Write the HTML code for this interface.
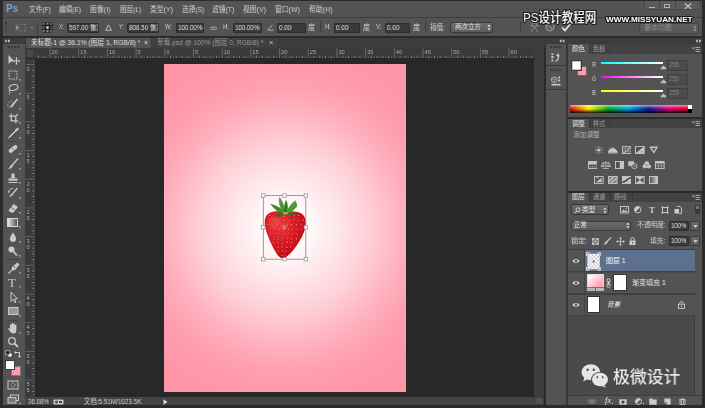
<!DOCTYPE html>
<html lang="zh-CN"><head><meta charset="utf-8"><title>Photoshop</title><style>
*{margin:0;padding:0;box-sizing:border-box}
html,body{width:705px;height:408px;overflow:hidden;background:#282828;}
body{position:relative;font-family:"Liberation Sans","Noto Sans CJK SC",sans-serif;color:#d0d0d0;font-size:8px;line-height:1}
.a{position:absolute}
.t{position:absolute;white-space:nowrap;line-height:10px;height:10px;will-change:transform}
.in{position:absolute;background:#3a3a3a;border:1px solid #2e2e2e;border-radius:1px;overflow:hidden}
</style></head><body>
<div class="a" style="left:0px;top:0px;width:705px;height:408px;background:#2b2b2b;"></div>
<div class="a" style="left:3px;top:1px;width:699px;height:16px;background:#535353;"></div>
<div class="t" id="t0" style="left:6.4px;top:3.3000000000000007px;font-size:11.5px;color:#74a3dc;transform-origin:0 50%;transform:scaleX(0.852);font-weight:bold">Ps</div>
<div class="t" id="t1" style="left:28.6px;top:4.9px;font-size:7.8px;color:#d4d4d4;transform-origin:0 50%;transform:scaleX(0.857);">文件(F)</div>
<div class="t" id="t2" style="left:59.2px;top:4.9px;font-size:7.8px;color:#d4d4d4;transform-origin:0 50%;transform:scaleX(0.846);">编辑(E)</div>
<div class="t" id="t3" style="left:89.9px;top:4.9px;font-size:7.8px;color:#d4d4d4;transform-origin:0 50%;transform:scaleX(0.889);">图像(I)</div>
<div class="t" id="t4" style="left:120px;top:4.9px;font-size:7.8px;color:#d4d4d4;transform-origin:0 50%;transform:scaleX(0.844);">图层(L)</div>
<div class="t" id="t5" style="left:150px;top:4.9px;font-size:7.8px;color:#d4d4d4;transform-origin:0 50%;transform:scaleX(0.877);">类型(Y)</div>
<div class="t" id="t6" style="left:181.5px;top:4.9px;font-size:7.8px;color:#d4d4d4;transform-origin:0 50%;transform:scaleX(0.854);">选择(S)</div>
<div class="t" id="t7" style="left:212px;top:4.9px;font-size:7.8px;color:#d4d4d4;transform-origin:0 50%;transform:scaleX(0.872);">滤镜(T)</div>
<div class="t" id="t8" style="left:243.3px;top:4.9px;font-size:7.8px;color:#d4d4d4;transform-origin:0 50%;transform:scaleX(0.881);">视图(V)</div>
<div class="t" id="t9" style="left:275.4px;top:4.9px;font-size:7.8px;color:#d4d4d4;transform-origin:0 50%;transform:scaleX(0.881);">窗口(W)</div>
<div class="t" id="t10" style="left:309px;top:4.9px;font-size:7.8px;color:#d4d4d4;transform-origin:0 50%;transform:scaleX(0.893);">帮助(H)</div>
<div class="a" style="left:643.7px;top:1px;width:57px;height:9.2px;background:#5b5b5b;border-radius:0 0 2px 2px;border:0.700px solid #474747;border-top:0"></div>
<div class="a" style="left:659.3px;top:1px;width:0.8px;height:9px;background:#484848;"></div>
<div class="a" style="left:674.5px;top:1px;width:0.8px;height:9px;background:#484848;"></div>
<div class="a" style="left:648.5px;top:6.5px;width:6px;height:1.6px;background:#b4b4b4;"></div>
<div class="a" style="left:664px;top:3.5px;width:6px;height:4.5px;background:transparent;border:1.300px solid #b0b0b0"></div>
<svg class="a" style="left:684px;top:2.500px" width="8" height="6.500" viewBox="0 0 8 6.500"><path d="M0.800 0.500 L7.200 6 M7.200 0.500 L0.800 6" stroke="#c4c4c4" stroke-width="1.300"/></svg>
<div class="a" style="left:3px;top:18px;width:699px;height:18px;background:#535353;"></div>
<div class="a" style="left:3px;top:17px;width:699px;height:1px;background:#3e3e3e;"></div>
<div class="a" style="left:5.2px;top:22.3px;width:1.6px;height:1.3px;background:#363636;"></div>
<div class="a" style="left:5.2px;top:24.900000000000002px;width:1.6px;height:1.3px;background:#363636;"></div>
<div class="a" style="left:5.2px;top:27.5px;width:1.6px;height:1.3px;background:#363636;"></div>
<div class="a" style="left:5.2px;top:30.1px;width:1.6px;height:1.3px;background:#363636;"></div>
<svg class="a" style="left:14.5px;top:23px" width="20" height="10" viewBox="0 0 20 10"><path d="M0.8 1.2 L0.8 7.8 L4.6 4.5 Z" fill="#8e8e8e"/><path d="M4 1.5h6.5M4 8h6.500M10.200 1.500v6.500" stroke="#858585" stroke-width="0.900" stroke-dasharray="1.300 1.100" fill="none"/><path d="M15.600 4 h2.800 l-1.400 1.800z" fill="#909090"/></svg>
<div class="a" style="left:36.5px;top:21px;width:1px;height:13px;background:#404040;"></div>
<svg class="a" style="left:42.200px;top:22.200px" width="11" height="11" viewBox="0 0 11 11"><rect width="11" height="11" fill="#202020"/><rect x="0.9" y="0.9" width="1.600" height="1.600" fill="#202020" stroke="#8c8c8c" stroke-width="0.600"/><rect x="0.9" y="4.7" width="1.600" height="1.600" fill="#202020" stroke="#8c8c8c" stroke-width="0.600"/><rect x="0.9" y="8.5" width="1.600" height="1.600" fill="#202020" stroke="#8c8c8c" stroke-width="0.600"/><rect x="4.7" y="0.9" width="1.600" height="1.600" fill="#202020" stroke="#8c8c8c" stroke-width="0.600"/><rect x="4.7" y="4.7" width="1.600" height="1.600" fill="#202020" stroke="#8c8c8c" stroke-width="0.600"/><rect x="4.7" y="8.5" width="1.600" height="1.600" fill="#202020" stroke="#8c8c8c" stroke-width="0.600"/><rect x="8.5" y="0.9" width="1.600" height="1.600" fill="#202020" stroke="#8c8c8c" stroke-width="0.600"/><rect x="8.5" y="4.7" width="1.600" height="1.600" fill="#202020" stroke="#8c8c8c" stroke-width="0.600"/><rect x="8.5" y="8.5" width="1.600" height="1.600" fill="#202020" stroke="#8c8c8c" stroke-width="0.600"/><rect x="4.500" y="4.500" width="2" height="2" fill="#eee"/></svg>
<div class="t" id="t11" style="left:58.7px;top:22.3px;font-size:7.5px;color:#d0d0d0;transform-origin:0 50%;transform:scaleX(0.648);">X:</div>
<div class="in" style="left:66.9px;top:22.5px;width:32.3px;height:10.5px"><div class="t" id="t12" style="left:1.0px;top:-0.8px;font-size:7.5px;color:#e0e0e0;transform-origin:0 50%;transform:scaleX(0.837)">597.00 像素</div></div>
<svg class="a" style="left:104.5px;top:24px" width="7" height="7" viewBox="0 0 7 7"><path d="M3.5 0.8 L6.4 6.3 H0.6 Z" fill="none" stroke="#c8c8c8" stroke-width="0.9"/></svg>
<div class="t" id="t13" style="left:118.7px;top:22.3px;font-size:7.5px;color:#d0d0d0;transform-origin:0 50%;transform:scaleX(0.688);">Y:</div>
<div class="in" style="left:126.9px;top:22.5px;width:32.3px;height:10.5px"><div class="t" id="t14" style="left:0.6999999999999886px;top:-0.8px;font-size:7.5px;color:#e0e0e0;transform-origin:0 50%;transform:scaleX(0.837)">808.50 像素</div></div>
<div class="t" id="t15" style="left:164.6px;top:22.3px;font-size:7.5px;color:#d0d0d0;transform-origin:0 50%;transform:scaleX(0.764);">W:</div>
<div class="in" style="left:175.8px;top:22.5px;width:28.4px;height:10.5px"><div class="t" id="t16" style="left:1.0999999999999943px;top:-0.8px;font-size:7.5px;color:#e0e0e0;transform-origin:0 50%;transform:scaleX(0.817)">100.00%</div></div>
<svg class="a" style="left:209.5px;top:25.5px" width="7" height="5" viewBox="0 0 7 5"><rect x="0.5" y="1" width="3" height="2.6" rx="1.2" fill="none" stroke="#bdbdbd" stroke-width="0.8"/><rect x="3.5" y="1" width="3" height="2.6" rx="1.2" fill="none" stroke="#bdbdbd" stroke-width="0.8"/></svg>
<div class="t" id="t17" style="left:223.3px;top:22.3px;font-size:7.5px;color:#d0d0d0;transform-origin:0 50%;transform:scaleX(0.773);">H:</div>
<div class="in" style="left:233.3px;top:22.5px;width:28.3px;height:10.5px"><div class="t" id="t18" style="left:1.0px;top:-0.8px;font-size:7.5px;color:#e0e0e0;transform-origin:0 50%;transform:scaleX(0.817)">100.00%</div></div>
<svg class="a" style="left:266.5px;top:24px" width="7" height="7" viewBox="0 0 7 7"><path d="M5.5 0.8 L0.8 6.2 H6.5" fill="none" stroke="#c0c0c0" stroke-width="0.9"/></svg>
<div class="in" style="left:277px;top:22.5px;width:28.7px;height:10.5px"><div class="t" id="t19" style="left:0.8000000000000114px;top:-0.8px;font-size:7.5px;color:#e0e0e0;transform-origin:0 50%;transform:scaleX(0.842)">0.00</div></div>
<div class="t" id="t20" style="left:308px;top:22.5px;font-size:7.5px;color:#d0d0d0;transform-origin:0 50%;transform:scaleX(0.933);">度</div>
<div class="a" style="left:319.6px;top:21px;width:1px;height:12px;background:#3d3d3d;"></div>
<div class="t" id="t21" style="left:324.6px;top:22.3px;font-size:7.5px;color:#d0d0d0;transform-origin:0 50%;transform:scaleX(0.773);">H:</div>
<div class="in" style="left:334px;top:22.5px;width:25.8px;height:10.5px"><div class="t" id="t22" style="left:0.8000000000000114px;top:-0.8px;font-size:7.5px;color:#e0e0e0;transform-origin:0 50%;transform:scaleX(0.842)">0.00</div></div>
<div class="t" id="t23" style="left:362.9px;top:22.5px;font-size:7.5px;color:#d0d0d0;transform-origin:0 50%;transform:scaleX(0.933);">度</div>
<div class="t" id="t24" style="left:375.7px;top:22.3px;font-size:7.5px;color:#d0d0d0;transform-origin:0 50%;transform:scaleX(0.822);">V:</div>
<div class="in" style="left:385px;top:22.5px;width:25px;height:10.5px"><div class="t" id="t25" style="left:0.8999999999999773px;top:-0.8px;font-size:7.5px;color:#e0e0e0;transform-origin:0 50%;transform:scaleX(0.842)">0.00</div></div>
<div class="t" id="t26" style="left:413px;top:22.5px;font-size:7.5px;color:#d0d0d0;transform-origin:0 50%;transform:scaleX(0.933);">度</div>
<div class="a" style="left:424.7px;top:21px;width:1px;height:12px;background:#3d3d3d;"></div>
<div class="t" id="t27" style="left:429.8px;top:22.5px;font-size:7.5px;color:#d0d0d0;transform-origin:0 50%;transform:scaleX(0.889);">插值:</div>
<div class="a" style="left:450.2px;top:21.7px;width:43px;height:11px;background:linear-gradient(#6c6c6c,#5c5c5c);border:1px solid #3a3a3a;border-radius:2px"></div>
<div class="t" id="t28" style="left:454.5px;top:22.3px;font-size:7.2px;color:#e4e4e4;transform-origin:0 50%;transform:scaleX(0.897);">两次立方</div>
<svg class="a" style="left:486.5px;top:24px" width="4" height="7" viewBox="0 0 4 7"><path d="M0.3 2.8 L2 0.6 L3.7 2.8Z M0.3 4.2 L2 6.4 L3.7 4.2Z" fill="#d8d8d8"/></svg>
<div class="a" style="left:520px;top:21px;width:1px;height:12px;background:#3d3d3d;"></div>
<svg class="a" style="left:529px;top:21px" width="11" height="12" viewBox="0 0 11 12"><path d="M1 1 Q5.5 4 10 1 M1 4.5 Q5.5 6.5 10 4.5 M2 11 L5.5 6 L9 11 M3.5 1.8 L3.5 5 M7.5 1.8 V5" fill="none" stroke="#8f8f8f" stroke-width="0.9"/></svg>
<svg class="a" style="left:545px;top:22px" width="10" height="10" viewBox="0 0 10 10"><circle cx="5" cy="5" r="3.8" fill="none" stroke="#9a9a9a" stroke-width="1.2"/><path d="M2.3 2.3 L7.7 7.7" stroke="#9a9a9a" stroke-width="1.2"/></svg>
<svg class="a" style="left:561px;top:22px" width="11" height="10" viewBox="0 0 11 10"><path d="M1 5.5 L4 8.5 L10 1" fill="none" stroke="#e6e6e6" stroke-width="1.7"/></svg>
<div class="a" style="left:639.4px;top:23px;width:59.6px;height:10.5px;background:linear-gradient(#5e5e5e,#565656);border:1px solid #444;border-radius:2px"></div>
<div class="t" id="t29" style="left:644px;top:23.3px;font-size:7.5px;color:#8e8e8e;transform-origin:0 50%;transform:scaleX(0.933);">基本功能</div>
<svg class="a" style="left:692.5px;top:25px" width="4" height="7" viewBox="0 0 4 7"><path d="M0.3 2.8 L2 0.6 L3.7 2.8Z M0.3 4.2 L2 6.4 L3.7 4.2Z" fill="#999"/></svg>
<div class="t" id="t30" style="left:523px;top:13.5px;font-size:13.5px;color:#fff;transform-origin:0 50%;transform:scaleX(0.857);font-weight:500;line-height:16px;height:16px;top:10px;text-shadow:-1px -1px 0 #1c1c1c,1px -1px 0 #1c1c1c,-1px 1px 0 #1c1c1c,1px 1px 0 #1c1c1c,0 1.200px 0 #1c1c1c,0 -1.200px 0 #1c1c1c,1.200px 0 0 #1c1c1c,-1.200px 0 0 #1c1c1c">PS设计教程网</div>
<div class="t" id="t31" style="left:606.3px;top:15px;font-size:8px;color:#fff;transform-origin:0 50%;transform:scaleX(1.020);font-weight:bold;text-shadow:-1px -1px 0 #1c1c1c,1px -1px 0 #1c1c1c,-1px 1px 0 #1c1c1c,1px 1px 0 #1c1c1c,0 1.200px 0 #1c1c1c,0 -1.200px 0 #1c1c1c,1.200px 0 0 #1c1c1c,-1.200px 0 0 #1c1c1c">WWW.MISSYUAN.NET</div>
<div class="a" style="left:0px;top:36px;width:705px;height:1.5px;background:#2b2b2b;"></div>
<div class="a" style="left:3px;top:37.5px;width:21.5px;height:6.5px;background:#3c3c3c;"></div>
<svg class="a" style="left:5px;top:39px" width="6" height="4" viewBox="0 0 6 4"><path d="M0.300 0.300 L2.500 2 L0.300 3.700z M3.200 0.300 L5.400 2 L3.200 3.700z" fill="#d0d0d0"/></svg>
<div class="a" style="left:3px;top:44px;width:21.5px;height:361px;background:#535353;"></div>
<div class="a" style="left:8px;top:46px;width:11px;height:2px;background:#3c3c3c;background:repeating-linear-gradient(90deg,#3a3a3a 0 2px,#535353 2px 3px)"></div>
<div class="a" style="left:25px;top:37.5px;width:519.5px;height:10.5px;background:#3c3c3c;"></div>
<div class="a" style="left:25.5px;top:38px;width:125.5px;height:10px;background:#535353;"></div>
<div class="t" id="t32" style="left:30.7px;top:38px;font-size:7.6px;color:#e2e2e2;transform-origin:0 50%;transform:scaleX(0.883);">未标题-1 @ 36.1% (图层 1, RGB/8) *</div>
<div class="t" style="left:143.5px;top:38px;font-size:7.5px;color:#e2e2e2;">×</div>
<div class="a" style="left:151.5px;top:38px;width:125.5px;height:9.5px;background:#404040;"></div>
<div class="t" id="t33" style="left:157.4px;top:38px;font-size:7.6px;color:#9a9a9a;transform-origin:0 50%;transform:scaleX(0.875);">草莓.psd @ 100% (图层 0, RGB/8) *</div>
<div class="t" style="left:268.6px;top:38px;font-size:7.5px;color:#c8c8c8;">×</div>
<div class="a" style="left:25px;top:48px;width:509px;height:10.2px;background:#3a3a3a;"></div>
<div class="a" style="left:25px;top:58.5px;width:9.5px;height:339px;background:#3a3a3a;"></div>
<div class="a" style="left:25.5px;top:48.5px;width:8.5px;height:9.5px;background:#4a4a4a;border:1px solid #3a3a3a"></div>
<svg class="a" style="will-change:transform;left:34.5px;top:48px" width="499.5" height="10.5" viewBox="34.5 48 499.5 10.5"><rect x="37.56" y="55.700" width="1" height="2.500" fill="#7c7c7c"/><rect x="40.43" y="56.700" width="1" height="1.500" fill="#6c6c6c"/><rect x="43.30" y="55.700" width="1" height="2.500" fill="#7c7c7c"/><rect x="46.17" y="56.700" width="1" height="1.500" fill="#6c6c6c"/><rect x="49.04" y="48.500" width="1" height="9.700" fill="#686868"/><text x="51.04" y="54.3" font-size="5.700" fill="#a6abb1" font-family="Liberation Sans,sans-serif">20</text><rect x="51.91" y="56.700" width="1" height="1.500" fill="#6c6c6c"/><rect x="54.78" y="55.700" width="1" height="2.500" fill="#7c7c7c"/><rect x="57.65" y="56.700" width="1" height="1.500" fill="#6c6c6c"/><rect x="60.52" y="55.700" width="1" height="2.500" fill="#7c7c7c"/><rect x="63.39" y="56.700" width="1" height="1.500" fill="#6c6c6c"/><rect x="66.25" y="55.700" width="1" height="2.500" fill="#7c7c7c"/><rect x="69.12" y="56.700" width="1" height="1.500" fill="#6c6c6c"/><rect x="71.99" y="55.700" width="1" height="2.500" fill="#7c7c7c"/><rect x="74.86" y="56.700" width="1" height="1.500" fill="#6c6c6c"/><rect x="77.73" y="48.500" width="1" height="9.700" fill="#686868"/><text x="79.73" y="54.3" font-size="5.700" fill="#a6abb1" font-family="Liberation Sans,sans-serif">15</text><rect x="80.60" y="56.700" width="1" height="1.500" fill="#6c6c6c"/><rect x="83.47" y="55.700" width="1" height="2.500" fill="#7c7c7c"/><rect x="86.34" y="56.700" width="1" height="1.500" fill="#6c6c6c"/><rect x="89.21" y="55.700" width="1" height="2.500" fill="#7c7c7c"/><rect x="92.08" y="56.700" width="1" height="1.500" fill="#6c6c6c"/><rect x="94.94" y="55.700" width="1" height="2.500" fill="#7c7c7c"/><rect x="97.81" y="56.700" width="1" height="1.500" fill="#6c6c6c"/><rect x="100.68" y="55.700" width="1" height="2.500" fill="#7c7c7c"/><rect x="103.55" y="56.700" width="1" height="1.500" fill="#6c6c6c"/><rect x="106.42" y="48.500" width="1" height="9.700" fill="#686868"/><text x="108.42" y="54.3" font-size="5.700" fill="#a6abb1" font-family="Liberation Sans,sans-serif">10</text><rect x="109.29" y="56.700" width="1" height="1.500" fill="#6c6c6c"/><rect x="112.16" y="55.700" width="1" height="2.500" fill="#7c7c7c"/><rect x="115.03" y="56.700" width="1" height="1.500" fill="#6c6c6c"/><rect x="117.90" y="55.700" width="1" height="2.500" fill="#7c7c7c"/><rect x="120.77" y="56.700" width="1" height="1.500" fill="#6c6c6c"/><rect x="123.63" y="55.700" width="1" height="2.500" fill="#7c7c7c"/><rect x="126.50" y="56.700" width="1" height="1.500" fill="#6c6c6c"/><rect x="129.37" y="55.700" width="1" height="2.500" fill="#7c7c7c"/><rect x="132.24" y="56.700" width="1" height="1.500" fill="#6c6c6c"/><rect x="135.11" y="48.500" width="1" height="9.700" fill="#686868"/><text x="137.11" y="54.3" font-size="5.700" fill="#a6abb1" font-family="Liberation Sans,sans-serif">5</text><rect x="137.98" y="56.700" width="1" height="1.500" fill="#6c6c6c"/><rect x="140.85" y="55.700" width="1" height="2.500" fill="#7c7c7c"/><rect x="143.72" y="56.700" width="1" height="1.500" fill="#6c6c6c"/><rect x="146.59" y="55.700" width="1" height="2.500" fill="#7c7c7c"/><rect x="149.46" y="56.700" width="1" height="1.500" fill="#6c6c6c"/><rect x="152.32" y="55.700" width="1" height="2.500" fill="#7c7c7c"/><rect x="155.19" y="56.700" width="1" height="1.500" fill="#6c6c6c"/><rect x="158.06" y="55.700" width="1" height="2.500" fill="#7c7c7c"/><rect x="160.93" y="56.700" width="1" height="1.500" fill="#6c6c6c"/><rect x="163.80" y="48.500" width="1" height="9.700" fill="#686868"/><text x="165.80" y="54.3" font-size="5.700" fill="#a6abb1" font-family="Liberation Sans,sans-serif">0</text><rect x="166.67" y="56.700" width="1" height="1.500" fill="#6c6c6c"/><rect x="169.54" y="55.700" width="1" height="2.500" fill="#7c7c7c"/><rect x="172.41" y="56.700" width="1" height="1.500" fill="#6c6c6c"/><rect x="175.28" y="55.700" width="1" height="2.500" fill="#7c7c7c"/><rect x="178.15" y="56.700" width="1" height="1.500" fill="#6c6c6c"/><rect x="181.01" y="55.700" width="1" height="2.500" fill="#7c7c7c"/><rect x="183.88" y="56.700" width="1" height="1.500" fill="#6c6c6c"/><rect x="186.75" y="55.700" width="1" height="2.500" fill="#7c7c7c"/><rect x="189.62" y="56.700" width="1" height="1.500" fill="#6c6c6c"/><rect x="192.49" y="48.500" width="1" height="9.700" fill="#686868"/><text x="194.49" y="54.3" font-size="5.700" fill="#a6abb1" font-family="Liberation Sans,sans-serif">5</text><rect x="195.36" y="56.700" width="1" height="1.500" fill="#6c6c6c"/><rect x="198.23" y="55.700" width="1" height="2.500" fill="#7c7c7c"/><rect x="201.10" y="56.700" width="1" height="1.500" fill="#6c6c6c"/><rect x="203.97" y="55.700" width="1" height="2.500" fill="#7c7c7c"/><rect x="206.84" y="56.700" width="1" height="1.500" fill="#6c6c6c"/><rect x="209.70" y="55.700" width="1" height="2.500" fill="#7c7c7c"/><rect x="212.57" y="56.700" width="1" height="1.500" fill="#6c6c6c"/><rect x="215.44" y="55.700" width="1" height="2.500" fill="#7c7c7c"/><rect x="218.31" y="56.700" width="1" height="1.500" fill="#6c6c6c"/><rect x="221.18" y="48.500" width="1" height="9.700" fill="#686868"/><text x="223.18" y="54.3" font-size="5.700" fill="#a6abb1" font-family="Liberation Sans,sans-serif">10</text><rect x="224.05" y="56.700" width="1" height="1.500" fill="#6c6c6c"/><rect x="226.92" y="55.700" width="1" height="2.500" fill="#7c7c7c"/><rect x="229.79" y="56.700" width="1" height="1.500" fill="#6c6c6c"/><rect x="232.66" y="55.700" width="1" height="2.500" fill="#7c7c7c"/><rect x="235.53" y="56.700" width="1" height="1.500" fill="#6c6c6c"/><rect x="238.39" y="55.700" width="1" height="2.500" fill="#7c7c7c"/><rect x="241.26" y="56.700" width="1" height="1.500" fill="#6c6c6c"/><rect x="244.13" y="55.700" width="1" height="2.500" fill="#7c7c7c"/><rect x="247.00" y="56.700" width="1" height="1.500" fill="#6c6c6c"/><rect x="249.87" y="48.500" width="1" height="9.700" fill="#686868"/><text x="251.87" y="54.3" font-size="5.700" fill="#a6abb1" font-family="Liberation Sans,sans-serif">15</text><rect x="252.74" y="56.700" width="1" height="1.500" fill="#6c6c6c"/><rect x="255.61" y="55.700" width="1" height="2.500" fill="#7c7c7c"/><rect x="258.48" y="56.700" width="1" height="1.500" fill="#6c6c6c"/><rect x="261.35" y="55.700" width="1" height="2.500" fill="#7c7c7c"/><rect x="264.22" y="56.700" width="1" height="1.500" fill="#6c6c6c"/><rect x="267.08" y="55.700" width="1" height="2.500" fill="#7c7c7c"/><rect x="269.95" y="56.700" width="1" height="1.500" fill="#6c6c6c"/><rect x="272.82" y="55.700" width="1" height="2.500" fill="#7c7c7c"/><rect x="275.69" y="56.700" width="1" height="1.500" fill="#6c6c6c"/><rect x="278.56" y="48.500" width="1" height="9.700" fill="#686868"/><text x="280.56" y="54.3" font-size="5.700" fill="#a6abb1" font-family="Liberation Sans,sans-serif">20</text><rect x="281.43" y="56.700" width="1" height="1.500" fill="#6c6c6c"/><rect x="284.30" y="55.700" width="1" height="2.500" fill="#7c7c7c"/><rect x="287.17" y="56.700" width="1" height="1.500" fill="#6c6c6c"/><rect x="290.04" y="55.700" width="1" height="2.500" fill="#7c7c7c"/><rect x="292.91" y="56.700" width="1" height="1.500" fill="#6c6c6c"/><rect x="295.77" y="55.700" width="1" height="2.500" fill="#7c7c7c"/><rect x="298.64" y="56.700" width="1" height="1.500" fill="#6c6c6c"/><rect x="301.51" y="55.700" width="1" height="2.500" fill="#7c7c7c"/><rect x="304.38" y="56.700" width="1" height="1.500" fill="#6c6c6c"/><rect x="307.25" y="48.500" width="1" height="9.700" fill="#686868"/><text x="309.25" y="54.3" font-size="5.700" fill="#a6abb1" font-family="Liberation Sans,sans-serif">25</text><rect x="310.12" y="56.700" width="1" height="1.500" fill="#6c6c6c"/><rect x="312.99" y="55.700" width="1" height="2.500" fill="#7c7c7c"/><rect x="315.86" y="56.700" width="1" height="1.500" fill="#6c6c6c"/><rect x="318.73" y="55.700" width="1" height="2.500" fill="#7c7c7c"/><rect x="321.60" y="56.700" width="1" height="1.500" fill="#6c6c6c"/><rect x="324.46" y="55.700" width="1" height="2.500" fill="#7c7c7c"/><rect x="327.33" y="56.700" width="1" height="1.500" fill="#6c6c6c"/><rect x="330.20" y="55.700" width="1" height="2.500" fill="#7c7c7c"/><rect x="333.07" y="56.700" width="1" height="1.500" fill="#6c6c6c"/><rect x="335.94" y="48.500" width="1" height="9.700" fill="#686868"/><text x="337.94" y="54.3" font-size="5.700" fill="#a6abb1" font-family="Liberation Sans,sans-serif">30</text><rect x="338.81" y="56.700" width="1" height="1.500" fill="#6c6c6c"/><rect x="341.68" y="55.700" width="1" height="2.500" fill="#7c7c7c"/><rect x="344.55" y="56.700" width="1" height="1.500" fill="#6c6c6c"/><rect x="347.42" y="55.700" width="1" height="2.500" fill="#7c7c7c"/><rect x="350.29" y="56.700" width="1" height="1.500" fill="#6c6c6c"/><rect x="353.15" y="55.700" width="1" height="2.500" fill="#7c7c7c"/><rect x="356.02" y="56.700" width="1" height="1.500" fill="#6c6c6c"/><rect x="358.89" y="55.700" width="1" height="2.500" fill="#7c7c7c"/><rect x="361.76" y="56.700" width="1" height="1.500" fill="#6c6c6c"/><rect x="364.63" y="48.500" width="1" height="9.700" fill="#686868"/><text x="366.63" y="54.3" font-size="5.700" fill="#a6abb1" font-family="Liberation Sans,sans-serif">35</text><rect x="367.50" y="56.700" width="1" height="1.500" fill="#6c6c6c"/><rect x="370.37" y="55.700" width="1" height="2.500" fill="#7c7c7c"/><rect x="373.24" y="56.700" width="1" height="1.500" fill="#6c6c6c"/><rect x="376.11" y="55.700" width="1" height="2.500" fill="#7c7c7c"/><rect x="378.98" y="56.700" width="1" height="1.500" fill="#6c6c6c"/><rect x="381.84" y="55.700" width="1" height="2.500" fill="#7c7c7c"/><rect x="384.71" y="56.700" width="1" height="1.500" fill="#6c6c6c"/><rect x="387.58" y="55.700" width="1" height="2.500" fill="#7c7c7c"/><rect x="390.45" y="56.700" width="1" height="1.500" fill="#6c6c6c"/><rect x="393.32" y="48.500" width="1" height="9.700" fill="#686868"/><text x="395.32" y="54.3" font-size="5.700" fill="#a6abb1" font-family="Liberation Sans,sans-serif">40</text><rect x="396.19" y="56.700" width="1" height="1.500" fill="#6c6c6c"/><rect x="399.06" y="55.700" width="1" height="2.500" fill="#7c7c7c"/><rect x="401.93" y="56.700" width="1" height="1.500" fill="#6c6c6c"/><rect x="404.80" y="55.700" width="1" height="2.500" fill="#7c7c7c"/><rect x="407.67" y="56.700" width="1" height="1.500" fill="#6c6c6c"/><rect x="410.53" y="55.700" width="1" height="2.500" fill="#7c7c7c"/><rect x="413.40" y="56.700" width="1" height="1.500" fill="#6c6c6c"/><rect x="416.27" y="55.700" width="1" height="2.500" fill="#7c7c7c"/><rect x="419.14" y="56.700" width="1" height="1.500" fill="#6c6c6c"/><rect x="422.01" y="48.500" width="1" height="9.700" fill="#686868"/><text x="424.01" y="54.3" font-size="5.700" fill="#a6abb1" font-family="Liberation Sans,sans-serif">45</text><rect x="424.88" y="56.700" width="1" height="1.500" fill="#6c6c6c"/><rect x="427.75" y="55.700" width="1" height="2.500" fill="#7c7c7c"/><rect x="430.62" y="56.700" width="1" height="1.500" fill="#6c6c6c"/><rect x="433.49" y="55.700" width="1" height="2.500" fill="#7c7c7c"/><rect x="436.36" y="56.700" width="1" height="1.500" fill="#6c6c6c"/><rect x="439.22" y="55.700" width="1" height="2.500" fill="#7c7c7c"/><rect x="442.09" y="56.700" width="1" height="1.500" fill="#6c6c6c"/><rect x="444.96" y="55.700" width="1" height="2.500" fill="#7c7c7c"/><rect x="447.83" y="56.700" width="1" height="1.500" fill="#6c6c6c"/><rect x="450.70" y="48.500" width="1" height="9.700" fill="#686868"/><text x="452.70" y="54.3" font-size="5.700" fill="#a6abb1" font-family="Liberation Sans,sans-serif">50</text><rect x="453.57" y="56.700" width="1" height="1.500" fill="#6c6c6c"/><rect x="456.44" y="55.700" width="1" height="2.500" fill="#7c7c7c"/><rect x="459.31" y="56.700" width="1" height="1.500" fill="#6c6c6c"/><rect x="462.18" y="55.700" width="1" height="2.500" fill="#7c7c7c"/><rect x="465.05" y="56.700" width="1" height="1.500" fill="#6c6c6c"/><rect x="467.91" y="55.700" width="1" height="2.500" fill="#7c7c7c"/><rect x="470.78" y="56.700" width="1" height="1.500" fill="#6c6c6c"/><rect x="473.65" y="55.700" width="1" height="2.500" fill="#7c7c7c"/><rect x="476.52" y="56.700" width="1" height="1.500" fill="#6c6c6c"/><rect x="479.39" y="48.500" width="1" height="9.700" fill="#686868"/><text x="481.39" y="54.3" font-size="5.700" fill="#a6abb1" font-family="Liberation Sans,sans-serif">55</text><rect x="482.26" y="56.700" width="1" height="1.500" fill="#6c6c6c"/><rect x="485.13" y="55.700" width="1" height="2.500" fill="#7c7c7c"/><rect x="488.00" y="56.700" width="1" height="1.500" fill="#6c6c6c"/><rect x="490.87" y="55.700" width="1" height="2.500" fill="#7c7c7c"/><rect x="493.74" y="56.700" width="1" height="1.500" fill="#6c6c6c"/><rect x="496.60" y="55.700" width="1" height="2.500" fill="#7c7c7c"/><rect x="499.47" y="56.700" width="1" height="1.500" fill="#6c6c6c"/><rect x="502.34" y="55.700" width="1" height="2.500" fill="#7c7c7c"/><rect x="505.21" y="56.700" width="1" height="1.500" fill="#6c6c6c"/><rect x="508.08" y="48.500" width="1" height="9.700" fill="#686868"/><text x="510.08" y="54.3" font-size="5.700" fill="#a6abb1" font-family="Liberation Sans,sans-serif">60</text><rect x="510.95" y="56.700" width="1" height="1.500" fill="#6c6c6c"/><rect x="513.82" y="55.700" width="1" height="2.500" fill="#7c7c7c"/><rect x="516.69" y="56.700" width="1" height="1.500" fill="#6c6c6c"/><rect x="519.56" y="55.700" width="1" height="2.500" fill="#7c7c7c"/><rect x="522.43" y="56.700" width="1" height="1.500" fill="#6c6c6c"/><rect x="525.29" y="55.700" width="1" height="2.500" fill="#7c7c7c"/><rect x="528.16" y="56.700" width="1" height="1.500" fill="#6c6c6c"/><rect x="531.03" y="55.700" width="1" height="2.500" fill="#7c7c7c"/></svg>
<svg class="a" style="will-change:transform;left:25px;top:58.5px" width="9.5" height="339" viewBox="25 58.5 9.5 339"><rect x="33" y="60.63" width="1.500" height="1" fill="#6c6c6c"/><rect x="25.5" y="63.50" width="9" height="1" fill="#636363"/><text x="26.400" y="70.30" font-size="5.700" fill="#a6abb1" font-family="Liberation Sans,sans-serif">0</text><rect x="33" y="66.37" width="1.500" height="1" fill="#6c6c6c"/><rect x="32" y="69.24" width="2.500" height="1" fill="#7c7c7c"/><rect x="33" y="72.11" width="1.500" height="1" fill="#6c6c6c"/><rect x="32" y="74.98" width="2.500" height="1" fill="#7c7c7c"/><rect x="33" y="77.84" width="1.500" height="1" fill="#6c6c6c"/><rect x="32" y="80.71" width="2.500" height="1" fill="#7c7c7c"/><rect x="33" y="83.58" width="1.500" height="1" fill="#6c6c6c"/><rect x="32" y="86.45" width="2.500" height="1" fill="#7c7c7c"/><rect x="33" y="89.32" width="1.500" height="1" fill="#6c6c6c"/><rect x="25.5" y="92.19" width="9" height="1" fill="#636363"/><text x="26.400" y="98.99" font-size="5.700" fill="#a6abb1" font-family="Liberation Sans,sans-serif">5</text><rect x="33" y="95.06" width="1.500" height="1" fill="#6c6c6c"/><rect x="32" y="97.93" width="2.500" height="1" fill="#7c7c7c"/><rect x="33" y="100.80" width="1.500" height="1" fill="#6c6c6c"/><rect x="32" y="103.67" width="2.500" height="1" fill="#7c7c7c"/><rect x="33" y="106.53" width="1.500" height="1" fill="#6c6c6c"/><rect x="32" y="109.40" width="2.500" height="1" fill="#7c7c7c"/><rect x="33" y="112.27" width="1.500" height="1" fill="#6c6c6c"/><rect x="32" y="115.14" width="2.500" height="1" fill="#7c7c7c"/><rect x="33" y="118.01" width="1.500" height="1" fill="#6c6c6c"/><rect x="25.5" y="120.88" width="9" height="1" fill="#636363"/><text x="26.400" y="127.68" font-size="5.700" fill="#a6abb1" font-family="Liberation Sans,sans-serif">1</text><text x="26.400" y="133.68" font-size="5.700" fill="#a6abb1" font-family="Liberation Sans,sans-serif">0</text><rect x="33" y="123.75" width="1.500" height="1" fill="#6c6c6c"/><rect x="32" y="126.62" width="2.500" height="1" fill="#7c7c7c"/><rect x="33" y="129.49" width="1.500" height="1" fill="#6c6c6c"/><rect x="32" y="132.36" width="2.500" height="1" fill="#7c7c7c"/><rect x="33" y="135.22" width="1.500" height="1" fill="#6c6c6c"/><rect x="32" y="138.09" width="2.500" height="1" fill="#7c7c7c"/><rect x="33" y="140.96" width="1.500" height="1" fill="#6c6c6c"/><rect x="32" y="143.83" width="2.500" height="1" fill="#7c7c7c"/><rect x="33" y="146.70" width="1.500" height="1" fill="#6c6c6c"/><rect x="25.5" y="149.57" width="9" height="1" fill="#636363"/><text x="26.400" y="156.37" font-size="5.700" fill="#a6abb1" font-family="Liberation Sans,sans-serif">1</text><text x="26.400" y="162.37" font-size="5.700" fill="#a6abb1" font-family="Liberation Sans,sans-serif">5</text><rect x="33" y="152.44" width="1.500" height="1" fill="#6c6c6c"/><rect x="32" y="155.31" width="2.500" height="1" fill="#7c7c7c"/><rect x="33" y="158.18" width="1.500" height="1" fill="#6c6c6c"/><rect x="32" y="161.05" width="2.500" height="1" fill="#7c7c7c"/><rect x="33" y="163.91" width="1.500" height="1" fill="#6c6c6c"/><rect x="32" y="166.78" width="2.500" height="1" fill="#7c7c7c"/><rect x="33" y="169.65" width="1.500" height="1" fill="#6c6c6c"/><rect x="32" y="172.52" width="2.500" height="1" fill="#7c7c7c"/><rect x="33" y="175.39" width="1.500" height="1" fill="#6c6c6c"/><rect x="25.5" y="178.26" width="9" height="1" fill="#636363"/><text x="26.400" y="185.06" font-size="5.700" fill="#a6abb1" font-family="Liberation Sans,sans-serif">2</text><text x="26.400" y="191.06" font-size="5.700" fill="#a6abb1" font-family="Liberation Sans,sans-serif">0</text><rect x="33" y="181.13" width="1.500" height="1" fill="#6c6c6c"/><rect x="32" y="184.00" width="2.500" height="1" fill="#7c7c7c"/><rect x="33" y="186.87" width="1.500" height="1" fill="#6c6c6c"/><rect x="32" y="189.74" width="2.500" height="1" fill="#7c7c7c"/><rect x="33" y="192.60" width="1.500" height="1" fill="#6c6c6c"/><rect x="32" y="195.47" width="2.500" height="1" fill="#7c7c7c"/><rect x="33" y="198.34" width="1.500" height="1" fill="#6c6c6c"/><rect x="32" y="201.21" width="2.500" height="1" fill="#7c7c7c"/><rect x="33" y="204.08" width="1.500" height="1" fill="#6c6c6c"/><rect x="25.5" y="206.95" width="9" height="1" fill="#636363"/><text x="26.400" y="213.75" font-size="5.700" fill="#a6abb1" font-family="Liberation Sans,sans-serif">2</text><text x="26.400" y="219.75" font-size="5.700" fill="#a6abb1" font-family="Liberation Sans,sans-serif">5</text><rect x="33" y="209.82" width="1.500" height="1" fill="#6c6c6c"/><rect x="32" y="212.69" width="2.500" height="1" fill="#7c7c7c"/><rect x="33" y="215.56" width="1.500" height="1" fill="#6c6c6c"/><rect x="32" y="218.43" width="2.500" height="1" fill="#7c7c7c"/><rect x="33" y="221.30" width="1.500" height="1" fill="#6c6c6c"/><rect x="32" y="224.16" width="2.500" height="1" fill="#7c7c7c"/><rect x="33" y="227.03" width="1.500" height="1" fill="#6c6c6c"/><rect x="32" y="229.90" width="2.500" height="1" fill="#7c7c7c"/><rect x="33" y="232.77" width="1.500" height="1" fill="#6c6c6c"/><rect x="25.5" y="235.64" width="9" height="1" fill="#636363"/><text x="26.400" y="242.44" font-size="5.700" fill="#a6abb1" font-family="Liberation Sans,sans-serif">3</text><text x="26.400" y="248.44" font-size="5.700" fill="#a6abb1" font-family="Liberation Sans,sans-serif">0</text><rect x="33" y="238.51" width="1.500" height="1" fill="#6c6c6c"/><rect x="32" y="241.38" width="2.500" height="1" fill="#7c7c7c"/><rect x="33" y="244.25" width="1.500" height="1" fill="#6c6c6c"/><rect x="32" y="247.12" width="2.500" height="1" fill="#7c7c7c"/><rect x="33" y="249.99" width="1.500" height="1" fill="#6c6c6c"/><rect x="32" y="252.85" width="2.500" height="1" fill="#7c7c7c"/><rect x="33" y="255.72" width="1.500" height="1" fill="#6c6c6c"/><rect x="32" y="258.59" width="2.500" height="1" fill="#7c7c7c"/><rect x="33" y="261.46" width="1.500" height="1" fill="#6c6c6c"/><rect x="25.5" y="264.33" width="9" height="1" fill="#636363"/><text x="26.400" y="271.13" font-size="5.700" fill="#a6abb1" font-family="Liberation Sans,sans-serif">3</text><text x="26.400" y="277.13" font-size="5.700" fill="#a6abb1" font-family="Liberation Sans,sans-serif">5</text><rect x="33" y="267.20" width="1.500" height="1" fill="#6c6c6c"/><rect x="32" y="270.07" width="2.500" height="1" fill="#7c7c7c"/><rect x="33" y="272.94" width="1.500" height="1" fill="#6c6c6c"/><rect x="32" y="275.81" width="2.500" height="1" fill="#7c7c7c"/><rect x="33" y="278.68" width="1.500" height="1" fill="#6c6c6c"/><rect x="32" y="281.54" width="2.500" height="1" fill="#7c7c7c"/><rect x="33" y="284.41" width="1.500" height="1" fill="#6c6c6c"/><rect x="32" y="287.28" width="2.500" height="1" fill="#7c7c7c"/><rect x="33" y="290.15" width="1.500" height="1" fill="#6c6c6c"/><rect x="25.5" y="293.02" width="9" height="1" fill="#636363"/><text x="26.400" y="299.82" font-size="5.700" fill="#a6abb1" font-family="Liberation Sans,sans-serif">4</text><text x="26.400" y="305.82" font-size="5.700" fill="#a6abb1" font-family="Liberation Sans,sans-serif">0</text><rect x="33" y="295.89" width="1.500" height="1" fill="#6c6c6c"/><rect x="32" y="298.76" width="2.500" height="1" fill="#7c7c7c"/><rect x="33" y="301.63" width="1.500" height="1" fill="#6c6c6c"/><rect x="32" y="304.50" width="2.500" height="1" fill="#7c7c7c"/><rect x="33" y="307.37" width="1.500" height="1" fill="#6c6c6c"/><rect x="32" y="310.23" width="2.500" height="1" fill="#7c7c7c"/><rect x="33" y="313.10" width="1.500" height="1" fill="#6c6c6c"/><rect x="32" y="315.97" width="2.500" height="1" fill="#7c7c7c"/><rect x="33" y="318.84" width="1.500" height="1" fill="#6c6c6c"/><rect x="25.5" y="321.71" width="9" height="1" fill="#636363"/><text x="26.400" y="328.51" font-size="5.700" fill="#a6abb1" font-family="Liberation Sans,sans-serif">4</text><text x="26.400" y="334.51" font-size="5.700" fill="#a6abb1" font-family="Liberation Sans,sans-serif">5</text><rect x="33" y="324.58" width="1.500" height="1" fill="#6c6c6c"/><rect x="32" y="327.45" width="2.500" height="1" fill="#7c7c7c"/><rect x="33" y="330.32" width="1.500" height="1" fill="#6c6c6c"/><rect x="32" y="333.19" width="2.500" height="1" fill="#7c7c7c"/><rect x="33" y="336.06" width="1.500" height="1" fill="#6c6c6c"/><rect x="32" y="338.92" width="2.500" height="1" fill="#7c7c7c"/><rect x="33" y="341.79" width="1.500" height="1" fill="#6c6c6c"/><rect x="32" y="344.66" width="2.500" height="1" fill="#7c7c7c"/><rect x="33" y="347.53" width="1.500" height="1" fill="#6c6c6c"/><rect x="25.5" y="350.40" width="9" height="1" fill="#636363"/><text x="26.400" y="357.20" font-size="5.700" fill="#a6abb1" font-family="Liberation Sans,sans-serif">5</text><text x="26.400" y="363.20" font-size="5.700" fill="#a6abb1" font-family="Liberation Sans,sans-serif">0</text><rect x="33" y="353.27" width="1.500" height="1" fill="#6c6c6c"/><rect x="32" y="356.14" width="2.500" height="1" fill="#7c7c7c"/><rect x="33" y="359.01" width="1.500" height="1" fill="#6c6c6c"/><rect x="32" y="361.88" width="2.500" height="1" fill="#7c7c7c"/><rect x="33" y="364.75" width="1.500" height="1" fill="#6c6c6c"/><rect x="32" y="367.61" width="2.500" height="1" fill="#7c7c7c"/><rect x="33" y="370.48" width="1.500" height="1" fill="#6c6c6c"/><rect x="32" y="373.35" width="2.500" height="1" fill="#7c7c7c"/><rect x="33" y="376.22" width="1.500" height="1" fill="#6c6c6c"/><rect x="25.5" y="379.09" width="9" height="1" fill="#636363"/><text x="26.400" y="385.89" font-size="5.700" fill="#a6abb1" font-family="Liberation Sans,sans-serif">5</text><text x="26.400" y="391.89" font-size="5.700" fill="#a6abb1" font-family="Liberation Sans,sans-serif">5</text><rect x="33" y="381.96" width="1.500" height="1" fill="#6c6c6c"/><rect x="32" y="384.83" width="2.500" height="1" fill="#7c7c7c"/><rect x="33" y="387.70" width="1.500" height="1" fill="#6c6c6c"/><rect x="32" y="390.57" width="2.500" height="1" fill="#7c7c7c"/><rect x="33" y="393.44" width="1.500" height="1" fill="#6c6c6c"/><rect x="32" y="396.30" width="2.500" height="1" fill="#7c7c7c"/></svg>
<div class="a" style="left:34.5px;top:58.2px;width:499.5px;height:339.3px;background:#282828;"></div>
<div class="a" style="left:164px;top:64px;width:241.5px;height:327.5px;background:radial-gradient(circle 170px at 50% 50%,#ffffff 0%,#fffdfd 8%,#fff4f6 18%,#ffe7eb 30%,#ffcdd5 51%,#ffb0be 70%,#ff9fb0 85%,#ff99ab 95%,#ff96a8 108%)"></div>
<div class="a" style="left:534px;top:48px;width:9.5px;height:349px;background:#3d3d3d;"></div>
<div class="a" style="left:25px;top:397px;width:519px;height:8px;background:#444;"></div>
<div class="a" style="left:534px;top:397px;width:9.5px;height:8px;background:#505050;border:1px solid #3a3a3a"></div>
<div class="t" id="t34" style="left:27.6px;top:396.5px;font-size:7.5px;color:#d0d0d0;transform-origin:0 50%;transform:scaleX(0.822);">36.08%</div>
<svg class="a" style="left:53px;top:398.5px" width="11" height="6" viewBox="0 0 11 6"><rect x="0.5" y="0.5" width="10" height="5" rx="1" fill="#ccc"/><circle cx="3.5" cy="3" r="1.4" fill="#444"/><rect x="6" y="2" width="3" height="2" fill="#444"/></svg>
<div class="t" id="t35" style="left:84.2px;top:396.5px;font-size:7.5px;color:#d0d0d0;transform-origin:0 50%;transform:scaleX(0.846);">文档:5.51M/1023.5K</div>
<svg class="a" style="left:163px;top:399px" width="5" height="6" viewBox="0 0 5 6"><path d="M0.5 0.3 L4.5 3 L0.5 5.7Z" fill="#ddd"/></svg>
<div class="a" style="left:545px;top:37.5px;width:157px;height:6.5px;background:#3c3c3c;"></div>
<svg class="a" style="left:559px;top:38.500px" width="6" height="4" viewBox="0 0 6 4"><path d="M2.500 0.300 L0.300 2 L2.500 3.700z M5.400 0.300 L3.200 2 L5.400 3.700z" fill="#d0d0d0"/></svg>
<svg class="a" style="left:695.500px;top:38.500px" width="6" height="4" viewBox="0 0 6 4"><path d="M0.300 0.300 L2.500 2 L0.300 3.700z M3.200 0.300 L5.400 2 L3.200 3.700z" fill="#d0d0d0"/></svg>
<div class="a" style="left:545.5px;top:44px;width:20.5px;height:361px;background:#535353;"></div>
<div class="a" style="left:545.5px;top:65.3px;width:20.5px;height:1.2px;background:#3a3a3a;"></div>
<div class="a" style="left:545.5px;top:88.8px;width:20.5px;height:1.2px;background:#3a3a3a;"></div>
<div class="a" style="left:550px;top:46px;width:11px;height:2px;background:;background:repeating-linear-gradient(90deg,#3a3a3a 0 2px,#535353 2px 3px)"></div>
<div class="a" style="left:550px;top:69px;width:11px;height:2px;background:;background:repeating-linear-gradient(90deg,#3a3a3a 0 2px,#535353 2px 3px)"></div>
<div class="a" style="left:566px;top:44px;width:1.5px;height:361px;background:#383838;"></div>
<div class="a" style="left:567.5px;top:44px;width:134.5px;height:9.5px;background:#424242;"></div>
<div class="a" style="left:567.5px;top:44px;width:21px;height:9.5px;background:#535353;"></div>
<div class="t" id="t36" style="left:571.9px;top:44px;font-size:7px;color:#e6e6e6;transform-origin:0 50%;transform:scaleX(0.914);">颜色</div>
<div class="t" id="t37" style="left:592.6px;top:44px;font-size:7px;color:#a0a0a0;transform-origin:0 50%;transform:scaleX(0.886);">色板</div>
<div class="a" style="left:588.5px;top:44px;width:0.8px;height:9.5px;background:#383838;"></div>
<div class="a" style="left:608.5px;top:44px;width:0.8px;height:9.5px;background:#383838;"></div>
<svg class="a" style="left:692px;top:46.5px" width="8" height="5" viewBox="0 0 8 5"><path d="M0 0.5h3l-1.5 2z" fill="#b0b0b0"/><path d="M3.5 0.5h4.5M3.5 2.5h4.5M3.5 4.5h4.5" stroke="#b0b0b0" stroke-width="0.9"/></svg>
<div class="a" style="left:567.5px;top:53.5px;width:134.5px;height:63.5px;background:#535353;"></div>
<div class="a" style="left:576.5px;top:66px;width:10px;height:10px;background:#ff9aab;border:0.5px solid #666"></div>
<div class="a" style="left:570.5px;top:60px;width:11px;height:10.5px;background:#fff;border:1px solid #3a3a3a;box-shadow:0 0 0 0.5px #888 inset"></div>
<div class="t" id="t38" style="left:591.5px;top:59.599999999999994px;font-size:7.5px;color:#cfcfcf;transform-origin:0 50%;transform:scaleX(0.738);">R</div>
<div class="a" style="left:600.5px;top:61.6px;width:62.5px;height:2.6px;background:linear-gradient(90deg,#00ffff,#fff);"></div>
<svg class="a" style="left:659.5px;top:64.6px" width="7" height="5" viewBox="0 0 7 5"><path d="M3.5 0.3 L6.5 3 V4.6 H0.5 V3Z" fill="#bdbdbd" stroke="#444" stroke-width="0.4"/></svg>
<div class="a" style="left:667px;top:60.0px;width:21px;height:10.5px;background:#4b4b4b;border:1px solid #404040"></div>
<div class="t" id="t39" style="left:668.7px;top:60.3px;font-size:7.3px;color:#858585;transform-origin:0 50%;transform:scaleX(0.821);">255</div>
<div class="t" id="t40" style="left:591.5px;top:73.6px;font-size:7.5px;color:#cfcfcf;transform-origin:0 50%;transform:scaleX(0.684);">G</div>
<div class="a" style="left:600.5px;top:75.6px;width:62.5px;height:2.6px;background:linear-gradient(90deg,#ff00ff,#fff);"></div>
<svg class="a" style="left:659.5px;top:78.6px" width="7" height="5" viewBox="0 0 7 5"><path d="M3.5 0.3 L6.5 3 V4.6 H0.5 V3Z" fill="#bdbdbd" stroke="#444" stroke-width="0.4"/></svg>
<div class="a" style="left:667px;top:74.0px;width:21px;height:10.5px;background:#4b4b4b;border:1px solid #404040"></div>
<div class="t" id="t41" style="left:668.7px;top:74.3px;font-size:7.3px;color:#858585;transform-origin:0 50%;transform:scaleX(0.821);">255</div>
<div class="t" id="t42" style="left:591.5px;top:87.6px;font-size:7.5px;color:#cfcfcf;transform-origin:0 50%;transform:scaleX(0.798);">B</div>
<div class="a" style="left:600.5px;top:89.6px;width:62.5px;height:2.6px;background:linear-gradient(90deg,#ffff00,#fff);"></div>
<svg class="a" style="left:659.5px;top:92.6px" width="7" height="5" viewBox="0 0 7 5"><path d="M3.5 0.3 L6.5 3 V4.6 H0.5 V3Z" fill="#bdbdbd" stroke="#444" stroke-width="0.4"/></svg>
<div class="a" style="left:667px;top:88.0px;width:21px;height:10.5px;background:#4b4b4b;border:1px solid #404040"></div>
<div class="t" id="t43" style="left:668.7px;top:88.3px;font-size:7.3px;color:#858585;transform-origin:0 50%;transform:scaleX(0.821);">255</div>
<div class="a" style="left:570px;top:105px;width:118px;height:8.2px;background:linear-gradient(rgba(255,255,255,0.600),rgba(255,255,255,0) 42%,rgba(0,0,0,0) 50%,rgba(0,0,0,0.900)),linear-gradient(90deg,#e8001c 0%,#ff7a00 8%,#fff000 16%,#8ccc00 24%,#00a040 33%,#00a890 42%,#00a0e6 50%,#0060c8 58%,#1c1c90 67%,#7a1496 75%,#e0007f 84%,#e60050 92%,#e8001c 100%);"></div>
<div class="a" style="left:688px;top:105px;width:4px;height:4.1px;background:#fff;"></div>
<div class="a" style="left:688px;top:109.1px;width:4px;height:4.1px;background:#000;"></div>
<div class="a" style="left:567.5px;top:119px;width:134.5px;height:9px;background:#424242;"></div>
<div class="a" style="left:567.5px;top:119px;width:21px;height:9px;background:#535353;"></div>
<div class="t" id="t44" style="left:571.9px;top:118.5px;font-size:7px;color:#e6e6e6;transform-origin:0 50%;transform:scaleX(0.914);">调整</div>
<div class="t" id="t45" style="left:592.9px;top:118.5px;font-size:7px;color:#a0a0a0;transform-origin:0 50%;transform:scaleX(0.871);">样式</div>
<div class="a" style="left:588.5px;top:119px;width:0.8px;height:9px;background:#383838;"></div>
<div class="a" style="left:608.5px;top:119px;width:0.8px;height:9px;background:#383838;"></div>
<svg class="a" style="left:692px;top:121px" width="8" height="5" viewBox="0 0 8 5"><path d="M0 0.5h3l-1.5 2z" fill="#b0b0b0"/><path d="M3.5 0.5h4.5M3.5 2.5h4.5M3.5 4.5h4.5" stroke="#b0b0b0" stroke-width="0.9"/></svg>
<div class="a" style="left:567.5px;top:128px;width:134.5px;height:62.5px;background:#535353;"></div>
<div class="t" id="t46" style="left:572.8px;top:130.4px;font-size:7.2px;color:#b4b4b4;transform-origin:0 50%;transform:scaleX(0.928);">添加调整</div>
<svg class="a" style="left:593.9000000000001px;top:145.8px" width="9.6" height="8" viewBox="0 0 10 9" preserveAspectRatio="none"><circle cx="5" cy="4.5" r="1.8" fill="#c6c6c6"/><path d="M5 0v2M5 7v2M0.5 4.5h2M7.5 4.5h2M1.8 1.3l1.3 1.3M6.9 6.4l1.3 1.3M8.2 1.3l-1.3 1.3M3.1 6.4l-1.3 1.3" stroke="#c6c6c6" stroke-width="0.8"/></svg>
<svg class="a" style="left:608.1px;top:145.8px" width="9.6" height="8" viewBox="0 0 10 9" preserveAspectRatio="none"><path d="M0 7.5V6l1-1 1-3 1 2 1-3 1 2 1-2 1 3 1-1 1 2 1 1v1.5z" fill="#c6c6c6"/><path d="M0 8.7h10" stroke="#c6c6c6" stroke-width="0.6"/></svg>
<svg class="a" style="left:621.5px;top:145.8px" width="9.6" height="8" viewBox="0 0 10 9" preserveAspectRatio="none"><rect x="0.5" y="0.5" width="9" height="8" fill="none" stroke="#c6c6c6"/><path d="M0.5 3h9M0.5 5.7h9M3.5 0.5v8M6.5 0.5v8" stroke="#c6c6c6" stroke-width="0.5"/><path d="M1 8 Q5 7 9 1" stroke="#c6c6c6" stroke-width="1" fill="none"/></svg>
<svg class="a" style="left:635.0px;top:145.8px" width="9.6" height="8" viewBox="0 0 10 9" preserveAspectRatio="none"><rect x="0.5" y="0.5" width="9" height="8" fill="none" stroke="#c6c6c6"/><path d="M0.5 8.5 L9.5 0.5 V8.5Z" fill="#c6c6c6"/><path d="M2 2.2h2M3 1.2v2M6 6.5h2" stroke="#555" stroke-width="0.6"/></svg>
<svg class="a" style="left:648.8000000000001px;top:145.8px" width="9.6" height="8" viewBox="0 0 10 9" preserveAspectRatio="none"><path d="M0.3 0.5h9.4L5 8.7z" fill="#c6c6c6"/><path d="M2.8 2.2h4.4L5 6z" fill="#555"/></svg>
<svg class="a" style="left:587.7px;top:160.9px" width="9.6" height="8" viewBox="0 0 10 9" preserveAspectRatio="none"><rect x="0.5" y="0.5" width="9" height="8" fill="none" stroke="#c6c6c6"/><rect x="1" y="1" width="8" height="3" fill="#c6c6c6"/><path d="M3 5.5v2M5 5.5v2M7 5.5v2" stroke="#c6c6c6" stroke-width="0.6"/></svg>
<svg class="a" style="left:601.2px;top:160.9px" width="9.6" height="8" viewBox="0 0 10 9" preserveAspectRatio="none"><path d="M5 0.5v7M2 8.5h6M1.5 2h7" stroke="#c6c6c6" stroke-width="0.9"/><path d="M0 6 L1.8 2.2 L3.6 6z M6.4 6 L8.2 2.2 L10 6z" fill="none" stroke="#c6c6c6" stroke-width="0.7"/><path d="M0 6h3.6M6.4 6H10" stroke="#c6c6c6" stroke-width="1.2"/></svg>
<svg class="a" style="left:614.9000000000001px;top:160.9px" width="9.6" height="8" viewBox="0 0 10 9" preserveAspectRatio="none"><rect x="0.5" y="0.5" width="9" height="8" fill="none" stroke="#c6c6c6"/><rect x="5" y="0.5" width="4.5" height="8" fill="#c6c6c6"/></svg>
<svg class="a" style="left:628.2px;top:160.9px" width="9.6" height="8" viewBox="0 0 10 9" preserveAspectRatio="none"><rect x="0.3" y="0.3" width="6" height="5.2" fill="#c6c6c6"/><circle cx="6.6" cy="5.8" r="2.8" fill="#535353" stroke="#c6c6c6" stroke-width="0.9"/><path d="M5 5.8h3.2" stroke="#c6c6c6" stroke-width="0.8"/></svg>
<svg class="a" style="left:641.6px;top:160.9px" width="9.6" height="8" viewBox="0 0 10 9" preserveAspectRatio="none"><circle cx="5" cy="2.8" r="2.4" fill="#c6c6c6"/><circle cx="3" cy="6" r="2.4" fill="#c6c6c6"/><circle cx="7" cy="6" r="2.4" fill="#c6c6c6"/><circle cx="5" cy="4.8" r="0.9" fill="#666"/></svg>
<svg class="a" style="left:655.4000000000001px;top:160.9px" width="9.6" height="8" viewBox="0 0 10 9" preserveAspectRatio="none"><rect x="0.5" y="0.5" width="9" height="8" fill="none" stroke="#c6c6c6"/><rect x="0.5" y="0.5" width="9" height="2.2" fill="#c6c6c6"/><path d="M0.5 5.5h9M3.5 0.5v8M6.5 0.5v8" stroke="#c6c6c6" stroke-width="0.6"/></svg>
<svg class="a" style="left:594.2px;top:175.7px" width="9.6" height="8" viewBox="0 0 10 9" preserveAspectRatio="none"><rect x="0.5" y="0.5" width="9" height="8" fill="none" stroke="#c6c6c6"/><path d="M2 7 L8 2 V7z" fill="#c6c6c6"/><path d="M2 2h3" stroke="#c6c6c6" stroke-width="0.8"/></svg>
<svg class="a" style="left:608.1px;top:175.7px" width="9.6" height="8" viewBox="0 0 10 9" preserveAspectRatio="none"><rect x="0.5" y="0.5" width="9" height="8" fill="#8a8a8a" stroke="#c6c6c6"/><path d="M1 6 L6 1 M3 8 L9 2.5" stroke="#c6c6c6" stroke-width="1.2"/></svg>
<svg class="a" style="left:621.5px;top:175.7px" width="9.6" height="8" viewBox="0 0 10 9" preserveAspectRatio="none"><rect x="0.5" y="0.5" width="9" height="8" fill="#c6c6c6" stroke="#c6c6c6"/><path d="M0.5 7 Q4 6 5 4.5 T9.5 2" stroke="#444" stroke-width="1.6" fill="none"/></svg>
<svg class="a" style="left:635.0px;top:175.7px" width="9.6" height="8" viewBox="0 0 10 9" preserveAspectRatio="none"><rect x="0.5" y="0.5" width="9" height="8" fill="#c6c6c6" stroke="#c6c6c6"/><path d="M1 1 L5 4.5 L1 8z M9 1 L5 4.5 L9 8z" fill="#555"/></svg>
<div class="a" style="left:648.8000000000001px;top:175.7px;width:9.600px;height:8px;border:1px solid #c6c6c6;background:linear-gradient(90deg,#555,#ccc)"></div>
<div class="a" style="left:567.5px;top:192.5px;width:134.5px;height:9px;background:#424242;"></div>
<div class="a" style="left:567.5px;top:192.5px;width:21px;height:9px;background:#535353;"></div>
<div class="t" id="t47" style="left:571.9px;top:192px;font-size:7px;color:#e6e6e6;transform-origin:0 50%;transform:scaleX(0.900);">图层</div>
<div class="t" id="t48" style="left:592.9px;top:192px;font-size:7px;color:#a0a0a0;transform-origin:0 50%;transform:scaleX(0.886);">通道</div>
<div class="t" id="t49" style="left:613.9px;top:192px;font-size:7px;color:#a0a0a0;transform-origin:0 50%;transform:scaleX(0.929);">路径</div>
<div class="a" style="left:588.5px;top:192.5px;width:0.8px;height:9px;background:#383838;"></div>
<div class="a" style="left:610.0px;top:192.5px;width:0.8px;height:9px;background:#383838;"></div>
<div class="a" style="left:631.5px;top:192.5px;width:0.8px;height:9px;background:#383838;"></div>
<svg class="a" style="left:692px;top:194.5px" width="8" height="5" viewBox="0 0 8 5"><path d="M0 0.5h3l-1.5 2z" fill="#b0b0b0"/><path d="M3.5 0.5h4.5M3.5 2.5h4.5M3.5 4.5h4.5" stroke="#b0b0b0" stroke-width="0.9"/></svg>
<div class="a" style="left:567.5px;top:201.5px;width:134.5px;height:203.5px;background:#535353;"></div>
<div class="a" style="left:570.7px;top:204.4px;width:38.5px;height:10.5px;background:linear-gradient(#6a6a6a,#5a5a5a);border:1px solid #3a3a3a;border-radius:2px"></div>
<svg class="a" style="left:573.5px;top:206.5px" width="7" height="7" viewBox="0 0 7 7"><circle cx="4" cy="2.8" r="2" fill="none" stroke="#e0e0e0" stroke-width="0.9"/><path d="M2.6 4.3 L0.6 6.4" stroke="#e0e0e0" stroke-width="1"/></svg>
<div class="t" id="t50" style="left:582.2px;top:204.6px;font-size:7.2px;color:#ececec;transform-origin:0 50%;transform:scaleX(0.917);">类型</div>
<svg class="a" style="left:603px;top:206.5px" width="4" height="7" viewBox="0 0 4 7"><path d="M0.3 2.8 L2 0.6 L3.7 2.8Z M0.3 4.2 L2 6.4 L3.7 4.2Z" fill="#d8d8d8"/></svg>
<svg class="a" style="left:620.3px;top:206.25px" width="9" height="7.5" viewBox="0 0 9 7.5" preserveAspectRatio="none"><rect x="0.5" y="0.5" width="8" height="6.5" fill="none" stroke="#cccccc" stroke-width="0.9"/><path d="M1.5 6 L3.5 3.5 L5 5 L6 4 L7.5 6z" fill="#cccccc"/><circle cx="6.3" cy="2.3" r="0.7" fill="#cccccc"/></svg>
<svg class="a" style="left:634.05px;top:206.25px" width="7.5" height="7.5" viewBox="0 0 7.5 7.5" preserveAspectRatio="none"><circle cx="3.75" cy="3.75" r="3.2" fill="none" stroke="#cccccc" stroke-width="0.9"/><path d="M3.75 0.5 A3.25 3.25 0 0 0 3.75 7z" fill="#cccccc" transform="rotate(45 3.75 3.75)"/></svg>
<div class="t" style="left:648.7px;top:205px;font-size:9px;color:#cccccc;font-family:'Liberation Serif',serif;font-weight:bold">T</div>
<svg class="a" style="left:661.0px;top:206.0px" width="8" height="8" viewBox="0 0 8 8" preserveAspectRatio="none"><rect x="1.5" y="1.5" width="5" height="5" fill="none" stroke="#cccccc" stroke-width="0.8"/><path d="M1.5 0v8M6.5 0v8M0 1.5h8M0 6.5h8" stroke="#cccccc" stroke-width="0.7"/></svg>
<svg class="a" style="left:674.3px;top:206.0px" width="8" height="8" viewBox="0 0 8 8" preserveAspectRatio="none"><rect x="0.5" y="3" width="4.5" height="4.5" fill="#cccccc"/><path d="M3 0.5h3l1.5 1.5v5.5H5" fill="none" stroke="#cccccc" stroke-width="0.9"/></svg>
<div class="a" style="left:695px;top:205px;width:5px;height:9px;background:#3a3a3a;border-radius:1px"></div>
<div class="a" style="left:696px;top:205.8px;width:3px;height:3px;background:#777;"></div>
<div class="a" style="left:570.7px;top:220.5px;width:60.5px;height:10px;background:linear-gradient(#6a6a6a,#5a5a5a);border:1px solid #3a3a3a;border-radius:2px"></div>
<div class="t" id="t51" style="left:574px;top:220.4px;font-size:7.2px;color:#ececec;transform-origin:0 50%;transform:scaleX(0.883);">正常</div>
<svg class="a" style="left:625.5px;top:222.2px" width="4" height="7" viewBox="0 0 4 7"><path d="M0.3 2.8 L2 0.6 L3.7 2.8Z M0.3 4.2 L2 6.4 L3.7 4.2Z" fill="#d8d8d8"/></svg>
<div class="t" id="t52" style="left:636.5px;top:220.4px;font-size:7px;color:#d6d6d6;transform-origin:0 50%;transform:scaleX(0.962);">不透明度:</div>
<div class="a" style="left:668.6px;top:220.5px;width:20px;height:10px;background:#3a3a3a;border:1px solid #2e2e2e"></div>
<div class="t" id="t53" style="left:670.7px;top:220.5px;font-size:7.2px;color:#e4e4e4;transform-origin:0 50%;transform:scaleX(0.832);">100%</div>
<div class="a" style="left:690px;top:220.5px;width:9.5px;height:10px;background:linear-gradient(#6a6a6a,#5a5a5a);border:1px solid #3a3a3a;border-radius:1px"></div>
<svg class="a" style="left:692.5px;top:224.5px" width="5" height="3" viewBox="0 0 5 3"><path d="M0.3 0.3h4.4L2.5 2.8z" fill="#ddd"/></svg>
<div class="t" id="t54" style="left:570.7px;top:235.5px;font-size:7.2px;color:#d6d6d6;transform-origin:0 50%;transform:scaleX(1.008);">锁定:</div>
<svg class="a" style="left:591.5px;top:237.5px" width="7" height="7" viewBox="0 0 7 7" preserveAspectRatio="none"><rect x="0.5" y="0.5" width="2" height="2" fill="#cccccc"/><rect x="0.5" y="2.5" width="2" height="2" fill="#777"/><rect x="0.5" y="4.5" width="2" height="2" fill="#cccccc"/><rect x="2.5" y="0.5" width="2" height="2" fill="#777"/><rect x="2.5" y="2.5" width="2" height="2" fill="#cccccc"/><rect x="2.5" y="4.5" width="2" height="2" fill="#777"/><rect x="4.5" y="0.5" width="2" height="2" fill="#cccccc"/><rect x="4.5" y="2.5" width="2" height="2" fill="#777"/><rect x="4.5" y="4.5" width="2" height="2" fill="#cccccc"/><rect x="0.4" y="0.4" width="6.2" height="6.2" fill="none" stroke="#cccccc" stroke-width="0.6"/></svg>
<svg class="a" style="left:603.2px;top:237.0px" width="9" height="8" viewBox="0 0 9 8" preserveAspectRatio="none"><path d="M8 0.5 L3.5 5" stroke="#cccccc" stroke-width="1.1"/><path d="M3.8 4.3 L4.8 5.3 Q3 8 0.3 7.6 Q2 6.8 2.2 5z" fill="#cccccc"/></svg>
<svg class="a" style="left:615.5px;top:236.5px" width="9" height="9" viewBox="0 0 9 9" preserveAspectRatio="none"><path d="M4.5 0 L6 1.8H3z M4.5 9 L6 7.2H3z M0 4.5 L1.8 3v3z M9 4.5 L7.2 3v3z" fill="#cccccc"/><path d="M4.5 1.5v6M1.5 4.5h6" stroke="#cccccc" stroke-width="0.8"/></svg>
<svg class="a" style="left:628.9px;top:236.55px" width="7" height="8.5" viewBox="0 0 7 8.5" preserveAspectRatio="none"><rect x="0.5" y="3.5" width="6" height="4.5" fill="#cccccc"/><path d="M1.8 3.5V2.3a1.7 1.7 0 0 1 3.4 0V3.5" fill="none" stroke="#cccccc" stroke-width="1"/><rect x="3" y="5" width="1" height="1.6" fill="#555"/></svg>
<div class="t" id="t55" style="left:650px;top:235.8px;font-size:7.2px;color:#d6d6d6;transform-origin:0 50%;transform:scaleX(0.934);">填充:</div>
<div class="a" style="left:668.6px;top:236.3px;width:20px;height:9.5px;background:#3a3a3a;border:1px solid #2e2e2e"></div>
<div class="t" id="t56" style="left:670.7px;top:236.1px;font-size:7.2px;color:#e4e4e4;transform-origin:0 50%;transform:scaleX(0.832);">100%</div>
<div class="a" style="left:690px;top:236.3px;width:9.5px;height:9.5px;background:linear-gradient(#6a6a6a,#5a5a5a);border:1px solid #3a3a3a;border-radius:1px"></div>
<svg class="a" style="left:692.5px;top:240px" width="5" height="3" viewBox="0 0 5 3"><path d="M0.3 0.3h4.4L2.5 2.8z" fill="#ddd"/></svg>
<div class="a" style="left:567.5px;top:249px;width:127px;height:1px;background:#3c3c3c;"></div>
<div class="a" style="left:567.5px;top:250px;width:127px;height:155px;background:#4a4a4a;"></div>
<div class="a" style="left:694.5px;top:249px;width:7.5px;height:147px;background:#535353;"></div>
<div class="a" style="left:694px;top:249px;width:0.7px;height:147px;background:#3c3c3c;"></div>
<div class="a" style="left:567.5px;top:250px;width:17px;height:21.30000000000001px;background:#535353;"></div>
<div class="a" style="left:584.5px;top:250px;width:110px;height:21.30000000000001px;background:#5d718f;"></div>
<div class="a" style="left:567.5px;top:271.3px;width:127px;height:1.2px;background:#404040;"></div>
<div class="a" style="left:584.0px;top:250px;width:0.7px;height:21.30000000000001px;background:#444;"></div>
<svg class="a" style="left:571.8px;top:257.95px" width="8" height="6" viewBox="0 0 8 6" preserveAspectRatio="none"><path d="M0.3 3 Q4 -0.8 7.7 3 Q4 6.8 0.3 3z" fill="#e4e4e4"/><circle cx="4" cy="3" r="1.5" fill="#444"/><circle cx="4" cy="3" r="0.6" fill="#ddd"/></svg>
<div class="a" style="left:567.5px;top:272.8px;width:17px;height:20.599999999999966px;background:#535353;"></div>
<div class="a" style="left:584.5px;top:272.8px;width:110px;height:20.599999999999966px;background:#535353;"></div>
<div class="a" style="left:567.5px;top:293.4px;width:127px;height:1.2px;background:#404040;"></div>
<div class="a" style="left:584.0px;top:272.8px;width:0.7px;height:20.599999999999966px;background:#444;"></div>
<svg class="a" style="left:571.8px;top:280.40000000000003px" width="8" height="6" viewBox="0 0 8 6" preserveAspectRatio="none"><path d="M0.3 3 Q4 -0.8 7.7 3 Q4 6.8 0.3 3z" fill="#e4e4e4"/><circle cx="4" cy="3" r="1.5" fill="#444"/><circle cx="4" cy="3" r="0.6" fill="#ddd"/></svg>
<div class="a" style="left:567.5px;top:294.8px;width:17px;height:20.19999999999999px;background:#535353;"></div>
<div class="a" style="left:584.5px;top:294.8px;width:110px;height:20.19999999999999px;background:#535353;"></div>
<div class="a" style="left:567.5px;top:315px;width:127px;height:1.2px;background:#404040;"></div>
<div class="a" style="left:584.0px;top:294.8px;width:0.7px;height:20.19999999999999px;background:#444;"></div>
<svg class="a" style="left:571.8px;top:302.2px" width="8" height="6" viewBox="0 0 8 6" preserveAspectRatio="none"><path d="M0.3 3 Q4 -0.8 7.7 3 Q4 6.8 0.3 3z" fill="#e4e4e4"/><circle cx="4" cy="3" r="1.5" fill="#444"/><circle cx="4" cy="3" r="0.6" fill="#ddd"/></svg>
<svg class="a" style="left:586.100px;top:251.600px" width="15.200" height="19" viewBox="0 0 16.5 20"><defs><pattern id="ck" width="4" height="4" patternUnits="userSpaceOnUse"><rect width="4" height="4" fill="#fff"/><rect width="2" height="2" fill="#ccc"/><rect x="2" y="2" width="2" height="2" fill="#ccc"/></pattern></defs><rect x="1.5" y="1.5" width="13.5" height="17" fill="url(#ck)"/><path d="M0.5 4V0.5H4M12.5 0.5H16V4M16 16v3.5h-3.5M4 19.500H0.5V16" fill="none" stroke="#e8e8e8" stroke-width="1"/><ellipse cx="8.2" cy="10" rx="0.9" ry="1.3" fill="#d22"/></svg>
<div class="t" id="t57" style="left:605.7px;top:256px;font-size:7.2px;color:#fff;transform-origin:0 50%;transform:scaleX(0.967);">图层 1</div>
<div class="a" style="left:587px;top:274.3px;width:17px;height:16.5px;background:linear-gradient(135deg,#fff 5%,#ffd0d7 40%,#ff8da0 95%);border:0.7px solid #ddd"></div>
<div class="a" style="left:587px;top:287.3px;width:17px;height:3.5px;background:#b8b8b8;"></div>
<div class="a" style="left:594.7px;top:288px;width:1.5px;height:2.8px;background:#666;"></div>
<div class="a" style="left:587px;top:287px;width:17px;height:0.6px;background:#777;"></div>
<svg class="a" style="left:606px;top:278px" width="5" height="10" viewBox="0 0 5 10"><rect x="1" y="0.6" width="3" height="4" rx="1.5" fill="none" stroke="#ddd" stroke-width="0.9"/><rect x="1" y="5.4" width="3" height="4" rx="1.5" fill="none" stroke="#ddd" stroke-width="0.9"/><path d="M2.5 3v4" stroke="#ddd" stroke-width="0.9"/></svg>
<div class="a" style="left:613.3px;top:274.2px;width:13.6px;height:16.8px;background:#fff;border:0.7px solid #333"></div>
<div class="t" id="t58" style="left:632px;top:278.2px;font-size:7.2px;color:#f0f0f0;transform-origin:0 50%;transform:scaleX(0.978);">渐变填充 1</div>
<div class="a" style="left:587px;top:296.3px;width:13.2px;height:16.8px;background:#fff;border:0.7px solid #333"></div>
<div class="t" id="t59" style="left:607px;top:300px;font-size:7.2px;color:#f4f4f4;transform-origin:0 50%;transform:scaleX(0.903);font-style:italic">背景</div>
<svg class="a" style="left:677.9px;top:301.0px" width="7" height="8" viewBox="0 0 7 8" preserveAspectRatio="none"><rect x="0.5" y="3.2" width="6" height="4.3" fill="none" stroke="#cccccc" stroke-width="0.9"/><path d="M1.8 3.2V2.2a1.7 1.7 0 0 1 3.4 0V3.2" fill="none" stroke="#cccccc" stroke-width="0.9"/><rect x="3" y="4.5" width="1" height="1.8" fill="#cccccc"/></svg>
<div class="a" style="left:567.5px;top:395.4px;width:134.5px;height:9.6px;background:#535353;"></div>
<div class="a" style="left:567.5px;top:395px;width:134.5px;height:0.8px;background:#3c3c3c;"></div>
<svg class="a" style="left:588.0px;top:399.0px" width="8" height="5" viewBox="0 0 8 5" preserveAspectRatio="none"><rect x="0.5" y="1" width="4" height="3" rx="1.5" fill="none" stroke="#999" stroke-width="0.8"/><rect x="3.5" y="1" width="4" height="3" rx="1.5" fill="none" stroke="#999" stroke-width="0.8"/></svg>
<div class="t" style="left:604.5px;top:396.3px;font-size:7.5px;color:#cccccc;font-style:italic;font-family:'Liberation Serif',serif;font-weight:bold">fx</div>
<div class="a" style="left:612.3px;top:403.2px;width:1px;height:1px;background:#cccccc;"></div>
<svg class="a" style="left:618.8px;top:398.5px" width="8" height="6" viewBox="0 0 8 6" preserveAspectRatio="none"><rect x="0.3" y="0.3" width="7.4" height="5.4" fill="#cccccc"/><circle cx="4" cy="3" r="1.6" fill="#444"/></svg>
<svg class="a" style="left:634.7px;top:398.0px" width="7" height="7" viewBox="0 0 7 7" preserveAspectRatio="none"><circle cx="3.5" cy="3.5" r="3" fill="none" stroke="#cccccc" stroke-width="0.9"/><path d="M3.5 0.5 A3 3 0 0 0 3.5 6.500z" fill="#cccccc" transform="rotate(45 3.5 3.5)"/></svg>
<div class="a" style="left:643px;top:403.2px;width:1px;height:1px;background:#cccccc;"></div>
<svg class="a" style="left:648.6px;top:397.8px" width="8" height="7" viewBox="0 0 8 7" preserveAspectRatio="none"><path d="M0.3 6.700V0.5h3l0.8 1h3.600v5.200z" fill="#cccccc"/></svg>
<svg class="a" style="left:663.9px;top:397.8px" width="7" height="7" viewBox="0 0 7 7" preserveAspectRatio="none"><path d="M0.4 0.4h6.200v6.200h-4l-2.200-2.200z" fill="#cccccc"/><path d="M0.4 4.400h2.200v2.200" fill="#555"/></svg>
<svg class="a" style="left:679.3px;top:397.8px" width="7" height="7" viewBox="0 0 7 7" preserveAspectRatio="none"><path d="M1 2h5v4.700h-5z" fill="none" stroke="#cccccc" stroke-width="0.9"/><path d="M0.2 1.500h6.600M2.500 0.600h2M2.500 3v3M4.500 3v3" stroke="#cccccc" stroke-width="0.8"/></svg>
<svg class="a" style="left:580px;top:362px" width="30" height="27" viewBox="0 0 30 27"><ellipse cx="10.8" cy="10.2" rx="9.300" ry="8" fill="#e6e6e6"/><path d="M4.500 15 L3.200 19.500 L8 17z" fill="#e6e6e6"/><circle cx="7.600" cy="7.800" r="1.200" fill="#4a4a4a"/><circle cx="13.800" cy="7.800" r="1.200" fill="#4a4a4a"/><ellipse cx="20" cy="17.500" rx="9" ry="7.600" fill="#4a4a4a"/><ellipse cx="20" cy="17.500" rx="8" ry="6.800" fill="#e6e6e6"/><path d="M24 23 L26.500 25.500 L21 24z" fill="#e6e6e6"/><circle cx="17.300" cy="15.300" r="1" fill="#4a4a4a"/><circle cx="22.700" cy="15.300" r="1" fill="#4a4a4a"/></svg>
<div class="t" id="t60" style="left:613px;top:372.5px;font-size:17px;color:#e8e8e8;transform-origin:0 50%;transform:scaleX(0.991);font-weight:500;line-height:20px;height:20px;top:367.500px">极微设计</div>
<svg class="a" style="left:4.699999999999999px;top:53.0px" width="16" height="14" viewBox="0 0 16 14"><path d="M3.500 2 L3.500 11 L5.800 8.800 L9 8z" fill="#cacaca"/><path d="M11.500 5v6M8.500 8h6" stroke="#cacaca" stroke-width="1"/><path d="M11.500 4l1.200 1.500h-2.400zM11.500 12l1.200-1.500h-2.400zM7.800 8l1.500-1.200v2.400zM15.200 8l-1.500-1.200v2.400z" fill="#cacaca"/></svg>
<svg class="a" style="left:4.699999999999999px;top:67.6px" width="16" height="14" viewBox="0 0 16 14"><rect x="4" y="3" width="8" height="8" fill="none" stroke="#cacaca" stroke-width="1" stroke-dasharray="1.600 1"/><path d="M14.500 12.200h2v2z" fill="#bbb" transform="translate(-1,-1)"/></svg>
<svg class="a" style="left:4.699999999999999px;top:82.3px" width="16" height="14" viewBox="0 0 16 14"><ellipse cx="8.500" cy="5.500" rx="4.500" ry="2.800" fill="none" stroke="#cacaca" stroke-width="1.100" transform="rotate(-15 8.500 5.500)"/><path d="M5 7.500 Q3.500 9 5 10.500 Q4 11.500 4.500 12.500" fill="none" stroke="#cacaca" stroke-width="0.900"/><path d="M14.500 12.200h2v2z" fill="#bbb" transform="translate(-1,-1)"/></svg>
<svg class="a" style="left:4.699999999999999px;top:97.0px" width="16" height="14" viewBox="0 0 16 14"><path d="M12.500 2 L8 7.500" stroke="#cacaca" stroke-width="1.600"/><path d="M7.800 6.500 L9 7.800 Q7.500 10.500 4.500 10z" fill="#cacaca"/><ellipse cx="5.500" cy="7.500" rx="2.800" ry="3.200" fill="none" stroke="#cacaca" stroke-width="0.700" stroke-dasharray="1 0.800"/><path d="M14.500 12.200h2v2z" fill="#bbb" transform="translate(-1,-1)"/></svg>
<svg class="a" style="left:4.699999999999999px;top:111.3px" width="16" height="14" viewBox="0 0 16 14"><path d="M6.200 2.800 V9.800 H13.200 M3.800 5.200 H10.800 V12.200 M10.800 5.200 L13 3" fill="none" stroke="#cacaca" stroke-width="1.200"/><path d="M14.500 12.200h2v2z" fill="#bbb" transform="translate(-1,-1)"/></svg>
<svg class="a" style="left:4.699999999999999px;top:126.0px" width="16" height="14" viewBox="0 0 16 14"><path d="M12.500 1.500 L14 3 L11.500 5.500 L10 4z" fill="#cacaca"/><path d="M10.500 4.500 L4.500 10.500 L3.500 12 L5 11 L11 5z" fill="none" stroke="#cacaca" stroke-width="1"/><path d="M14.500 12.200h2v2z" fill="#bbb" transform="translate(-1,-1)"/></svg>
<div class="a" style="left:7px;top:140.500px;width:12px;height:1px;background:#444"></div>
<svg class="a" style="left:4.699999999999999px;top:141.8px" width="16" height="14" viewBox="0 0 16 14"><rect x="3" y="5" width="10" height="4" rx="1.800" fill="#cacaca" transform="rotate(-40 8 7)"/><path d="M7 6.200l2 1.600" stroke="#555" stroke-width="0.700"/><path d="M14.500 12.200h2v2z" fill="#bbb" transform="translate(-1,-1)"/></svg>
<svg class="a" style="left:4.699999999999999px;top:156.5px" width="16" height="14" viewBox="0 0 16 14"><path d="M13 1.500 L7 8.500" stroke="#cacaca" stroke-width="1.300"/><path d="M6.800 7.500 L8 8.800 Q6.500 12 3 12 Q5 10.500 5 9z" fill="#cacaca"/><path d="M14.500 12.200h2v2z" fill="#bbb" transform="translate(-1,-1)"/></svg>
<svg class="a" style="left:4.699999999999999px;top:171.0px" width="16" height="14" viewBox="0 0 16 14"><path d="M6.500 2.500h3v3l1 1.500h-5l1-1.500z" fill="#cacaca"/><rect x="3.500" y="7.500" width="9" height="2.200" fill="#cacaca"/><path d="M3.500 11.500h9" stroke="#cacaca" stroke-width="1"/><path d="M14.500 12.200h2v2z" fill="#bbb" transform="translate(-1,-1)"/></svg>
<svg class="a" style="left:4.699999999999999px;top:186.0px" width="16" height="14" viewBox="0 0 16 14"><path d="M12.500 2 L7.500 8" stroke="#cacaca" stroke-width="1.200"/><path d="M7.200 7 L8.400 8.300 Q7 11 4 11z" fill="#cacaca"/><path d="M3.500 6.500 A4 4 0 0 1 8 2.500" fill="none" stroke="#cacaca" stroke-width="0.900"/><path d="M2.500 5l1 2 1.600-1.400z" fill="#cacaca"/><path d="M14.500 12.200h2v2z" fill="#bbb" transform="translate(-1,-1)"/></svg>
<svg class="a" style="left:4.699999999999999px;top:200.6px" width="16" height="14" viewBox="0 0 16 14"><path d="M8.500 3 L13 6 L8.500 11.500 H5.500 L3.500 9.500z" fill="#cacaca"/><path d="M5.800 6.200 L10.300 9.300" stroke="#555" stroke-width="0.800"/><path d="M14.500 12.200h2v2z" fill="#bbb" transform="translate(-1,-1)"/></svg>
<div class="a" style="left:7.200px;top:218px;width:11px;height:8.500px;border:1px solid #d4d4d4;background:linear-gradient(90deg,#e8e8e8,#555)"></div>
<svg class="a" style="left:4.699999999999999px;top:215.3px" width="16" height="14" viewBox="0 0 16 14"><path d="M14.500 12.200h2v2z" fill="#bbb" transform="translate(-1,-1)"/></svg>
<svg class="a" style="left:4.699999999999999px;top:230.0px" width="16" height="14" viewBox="0 0 16 14"><path d="M8 2.500 Q12 8 11 10 A3.200 3.200 0 0 1 5 10 Q4 8 8 2.500z" fill="#cacaca"/><path d="M14.500 12.200h2v2z" fill="#bbb" transform="translate(-1,-1)"/></svg>
<svg class="a" style="left:4.699999999999999px;top:244.3px" width="16" height="14" viewBox="0 0 16 14"><circle cx="6.500" cy="5.500" r="3" fill="#cacaca"/><path d="M8.500 7.500 L12 11.500" stroke="#cacaca" stroke-width="1.800"/><path d="M14.500 12.200h2v2z" fill="#bbb" transform="translate(-1,-1)"/></svg>
<div class="a" style="left:7px;top:259px;width:12px;height:1px;background:#444"></div>
<svg class="a" style="left:4.699999999999999px;top:260.5px" width="16" height="14" viewBox="0 0 16 14"><path d="M12.500 1.500 L14.500 3.500 L10 9 L6 10 L7 6z" fill="#cacaca"/><path d="M6 10 L3.500 12.500" stroke="#cacaca" stroke-width="1.200"/><circle cx="9.500" cy="6" r="0.800" fill="#555"/><path d="M14.500 12.200h2v2z" fill="#bbb" transform="translate(-1,-1)"/></svg>
<div class="t" style="left:8.300px;top:275.500px;font-size:13px;line-height:14px;height:14px;color:#cacaca;font-family:'Liberation Serif',serif">T</div>
<svg class="a" style="left:4.699999999999999px;top:275.2px" width="16" height="14" viewBox="0 0 16 14"><path d="M14.500 12.200h2v2z" fill="#bbb" transform="translate(-1,-1)"/></svg>
<svg class="a" style="left:4.699999999999999px;top:290.0px" width="16" height="14" viewBox="0 0 16 14"><path d="M6 2 V11.500 L8.200 9.300 L9.800 12.500 L11 12 L9.500 8.800 H12.500z" fill="none" stroke="#cacaca" stroke-width="1"/><path d="M14.500 12.200h2v2z" fill="#bbb" transform="translate(-1,-1)"/></svg>
<svg class="a" style="left:4.699999999999999px;top:304.2px" width="16" height="14" viewBox="0 0 16 14"><rect x="3.500" y="3.500" width="9.500" height="7" fill="#9a9a9a" stroke="#cacaca" stroke-width="1"/><path d="M14.500 12.200h2v2z" fill="#bbb" transform="translate(-1,-1)"/></svg>
<div class="a" style="left:7px;top:320px;width:12px;height:1px;background:#444"></div>
<svg class="a" style="left:4.699999999999999px;top:321.3px" width="16" height="14" viewBox="0 0 16 14"><path d="M5 7 V4a0.800 0.800 0 0 1 1.600 0V6.500 V2.800a0.800 0.800 0 0 1 1.600 0V6.500 V3.200a0.800 0.800 0 0 1 1.600 0V7 V4.500a0.800 0.800 0 0 1 1.600 0V9 Q11.400 12.500 8.500 12.500 Q6 12.500 5 10.500 L3 7.500 Q3.500 6.500 5 8z" fill="#cacaca"/><path d="M14.500 12.200h2v2z" fill="#bbb" transform="translate(-1,-1)"/></svg>
<svg class="a" style="left:4.699999999999999px;top:335.0px" width="16" height="14" viewBox="0 0 16 14"><circle cx="7" cy="6" r="3.300" fill="none" stroke="#cacaca" stroke-width="1.300"/><path d="M9.500 8.500 L13 12" stroke="#cacaca" stroke-width="1.800"/></svg>
<svg class="a" style="left:4.500px;top:349.500px" width="17" height="9" viewBox="0 0 17 9"><rect x="3" y="3" width="4" height="4" fill="#fff" stroke="#222" stroke-width="0.600"/><rect x="0.800" y="0.800" width="4" height="4" fill="#222" stroke="#ddd" stroke-width="0.600"/><path d="M11 2.500h3.500v4" fill="none" stroke="#ddd" stroke-width="0.900"/><path d="M11 1l-1.800 1.500 1.800 1.500z M13 6l1.500 1.800 1.500-1.800z" fill="#ddd"/></svg>
<div class="a" style="left:10.500px;top:365.500px;width:10px;height:10.500px;background:#ff9aab;border:0.600px solid #777"></div>
<div class="a" style="left:4.800px;top:360.200px;width:10.400px;height:10.200px;background:#fff;border:1px solid #3a3a3a"></div>
<svg class="a" style="left:4.699999999999999px;top:377.5px" width="16" height="14" viewBox="0 0 16 14"><rect x="3" y="3" width="10" height="8" fill="none" stroke="#cacaca" stroke-width="1"/><circle cx="8" cy="7" r="2" fill="none" stroke="#cacaca" stroke-width="0.900" stroke-dasharray="1 0.700"/></svg>
<svg class="a" style="left:4.699999999999999px;top:391.8px" width="16" height="14" viewBox="0 0 16 14"><rect x="5.500" y="3" width="8" height="5.500" fill="#535353" stroke="#cacaca" stroke-width="1"/><rect x="3" y="5.500" width="8" height="5.500" fill="#777" stroke="#cacaca" stroke-width="1"/><path d="M14.500 12.200h2v2z" fill="#bbb" transform="translate(-1,-1.500)"/></svg>
<svg class="a" style="left:551px;top:53px" width="10" height="9" viewBox="0 0 10 9"><rect x="0.500" y="0.300" width="1.800" height="1.800" fill="#cacaca"/><rect x="0.700" y="3.500" width="1.500" height="1.500" fill="none" stroke="#cacaca" stroke-width="0.600"/><rect x="0.500" y="6.700" width="1.800" height="1.800" fill="#cacaca"/><path d="M4.500 8.300 Q8.200 6.500 7 2.500" fill="none" stroke="#cacaca" stroke-width="1.300"/><path d="M4.800 3 L7.200 0.300 L8.800 3.600z" fill="#cacaca"/></svg>
<svg class="a" style="left:551px;top:75.500px" width="10" height="10" viewBox="0 0 10 10"><path d="M0.600 2.300 L3.200 1 L5.800 2.300 V5.300 L3.200 6.600 L0.600 5.300z" fill="none" stroke="#cacaca" stroke-width="0.800"/><path d="M0.600 2.300 L3.200 3.600 L5.800 2.300 M3.200 3.600 V6.600" fill="none" stroke="#cacaca" stroke-width="0.600"/><rect x="7.200" y="0.500" width="1.900" height="1.900" fill="#cacaca"/><rect x="7.200" y="3.500" width="1.900" height="1.900" fill="#cacaca"/><rect x="0.500" y="7.800" width="9" height="1.700" fill="#cacaca"/></svg>
<svg class="a" style="left:258px;top:190px" width="54" height="76" viewBox="258 190 54 76">
<defs><radialGradient id="sb" cx="0.380" cy="0.300" r="0.800"><stop offset="0" stop-color="#f23a40"/><stop offset="0.450" stop-color="#dd1a24"/><stop offset="0.800" stop-color="#c00f1a"/><stop offset="1" stop-color="#8f0a12"/></radialGradient>
<clipPath id="sbc"><path d="M284.500 212.300 C288 210.800 296 210.300 301.500 213.500 C306 216.500 306.500 222.500 305 228.500 C303.200 235.500 298.500 244 292 251.500 C288.800 255.200 285.200 258 282.500 258.300 C280 258.500 277.500 255.500 275 251 C270.800 243.500 266.200 233 265 226 C264.200 220 265 215.500 269 213.200 C273.500 210.800 280.500 211 284.500 212.300z"/></clipPath></defs>
<path d="M284.500 212.300 C288 210.800 296 210.300 301.500 213.500 C306 216.500 306.500 222.500 305 228.500 C303.200 235.500 298.500 244 292 251.500 C288.800 255.200 285.200 258 282.500 258.300 C280 258.500 277.500 255.500 275 251 C270.800 243.500 266.200 233 265 226 C264.200 220 265 215.500 269 213.200 C273.500 210.800 280.500 211 284.500 212.300z" fill="url(#sb)"/>
<g clip-path="url(#sbc)"><circle cx="269.79999999999995" cy="216.0" r="1.050" fill="#a50c14" opacity="0.550"/><circle cx="274.79999999999995" cy="216.1" r="1.050" fill="#a50c14" opacity="0.550"/><circle cx="279.29999999999995" cy="216.4" r="1.050" fill="#a50c14" opacity="0.550"/><circle cx="285.0" cy="216.9" r="1.050" fill="#a50c14" opacity="0.550"/><circle cx="289.7" cy="216.2" r="1.050" fill="#a50c14" opacity="0.550"/><circle cx="294.4" cy="216.2" r="1.050" fill="#a50c14" opacity="0.550"/><circle cx="298.79999999999995" cy="216.0" r="1.050" fill="#a50c14" opacity="0.550"/><circle cx="270.29999999999995" cy="221.5" r="1.050" fill="#a50c14" opacity="0.550"/><circle cx="275.7" cy="221.4" r="1.050" fill="#a50c14" opacity="0.550"/><circle cx="280.4" cy="220.6" r="1.050" fill="#a50c14" opacity="0.550"/><circle cx="284.59999999999997" cy="221.2" r="1.050" fill="#a50c14" opacity="0.550"/><circle cx="289.79999999999995" cy="221.4" r="1.050" fill="#a50c14" opacity="0.550"/><circle cx="294.7" cy="220.5" r="1.050" fill="#a50c14" opacity="0.550"/><circle cx="299.2" cy="221.2" r="1.050" fill="#a50c14" opacity="0.550"/><circle cx="303.79999999999995" cy="220.6" r="1.050" fill="#a50c14" opacity="0.550"/><circle cx="268.4" cy="225.0" r="1.050" fill="#a50c14" opacity="0.550"/><circle cx="273.7" cy="225.9" r="1.050" fill="#a50c14" opacity="0.550"/><circle cx="278.0" cy="225.3" r="1.050" fill="#a50c14" opacity="0.550"/><circle cx="283.09999999999997" cy="225.6" r="1.050" fill="#a50c14" opacity="0.550"/><circle cx="287.9" cy="225.9" r="1.050" fill="#a50c14" opacity="0.550"/><circle cx="292.2" cy="225.4" r="1.050" fill="#a50c14" opacity="0.550"/><circle cx="297.09999999999997" cy="225.4" r="1.050" fill="#a50c14" opacity="0.550"/><circle cx="301.4" cy="225.3" r="1.050" fill="#a50c14" opacity="0.550"/><circle cx="271.2" cy="229.5" r="1.050" fill="#a50c14" opacity="0.550"/><circle cx="274.9" cy="230.2" r="1.050" fill="#a50c14" opacity="0.550"/><circle cx="279.59999999999997" cy="230.0" r="1.050" fill="#a50c14" opacity="0.550"/><circle cx="284.2" cy="229.8" r="1.050" fill="#a50c14" opacity="0.550"/><circle cx="289.2" cy="229.6" r="1.050" fill="#a50c14" opacity="0.550"/><circle cx="293.0" cy="229.6" r="1.050" fill="#a50c14" opacity="0.550"/><circle cx="297.7" cy="229.7" r="1.050" fill="#a50c14" opacity="0.550"/><circle cx="301.79999999999995" cy="230.3" r="1.050" fill="#a50c14" opacity="0.550"/><circle cx="270.7" cy="234.6" r="1.050" fill="#a50c14" opacity="0.550"/><circle cx="275.79999999999995" cy="234.0" r="1.050" fill="#a50c14" opacity="0.550"/><circle cx="279.4" cy="234.2" r="1.050" fill="#a50c14" opacity="0.550"/><circle cx="284.59999999999997" cy="234.6" r="1.050" fill="#a50c14" opacity="0.550"/><circle cx="288.59999999999997" cy="234.3" r="1.050" fill="#a50c14" opacity="0.550"/><circle cx="293.0" cy="234.5" r="1.050" fill="#a50c14" opacity="0.550"/><circle cx="297.4" cy="234.7" r="1.050" fill="#a50c14" opacity="0.550"/><circle cx="274.4" cy="239.5" r="1.050" fill="#a50c14" opacity="0.550"/><circle cx="278.79999999999995" cy="239.6" r="1.050" fill="#a50c14" opacity="0.550"/><circle cx="282.7" cy="238.7" r="1.050" fill="#a50c14" opacity="0.550"/><circle cx="288.2" cy="239.3" r="1.050" fill="#a50c14" opacity="0.550"/><circle cx="292.2" cy="239.5" r="1.050" fill="#a50c14" opacity="0.550"/><circle cx="297.0" cy="239.4" r="1.050" fill="#a50c14" opacity="0.550"/><circle cx="274.09999999999997" cy="243.1" r="1.050" fill="#a50c14" opacity="0.550"/><circle cx="278.79999999999995" cy="243.1" r="1.050" fill="#a50c14" opacity="0.550"/><circle cx="283.2" cy="244.1" r="1.050" fill="#a50c14" opacity="0.550"/><circle cx="287.7" cy="242.9" r="1.050" fill="#a50c14" opacity="0.550"/><circle cx="291.9" cy="243.1" r="1.050" fill="#a50c14" opacity="0.550"/><circle cx="278.59999999999997" cy="247.8" r="1.050" fill="#a50c14" opacity="0.550"/><circle cx="282.4" cy="247.5" r="1.050" fill="#a50c14" opacity="0.550"/><circle cx="287.29999999999995" cy="247.9" r="1.050" fill="#a50c14" opacity="0.550"/><circle cx="290.79999999999995" cy="247.5" r="1.050" fill="#a50c14" opacity="0.550"/><circle cx="278.59999999999997" cy="251.6" r="1.050" fill="#a50c14" opacity="0.550"/><circle cx="283.0" cy="251.6" r="1.050" fill="#a50c14" opacity="0.550"/><circle cx="286.2" cy="252.0" r="1.050" fill="#a50c14" opacity="0.550"/><circle cx="282.4" cy="256.1" r="1.050" fill="#a50c14" opacity="0.550"/><circle cx="285.29999999999995" cy="255.5" r="1.050" fill="#a50c14" opacity="0.550"/><circle cx="269.4" cy="215.5" r="0.550" fill="#f7c9b4" opacity="0.900"/><circle cx="274.4" cy="215.6" r="0.550" fill="#f7c9b4" opacity="0.900"/><circle cx="278.9" cy="215.9" r="0.550" fill="#f7c9b4" opacity="0.900"/><circle cx="284.6" cy="216.4" r="0.550" fill="#f7c9b4" opacity="0.900"/><circle cx="289.3" cy="215.7" r="0.550" fill="#f7c9b4" opacity="0.900"/><circle cx="294.0" cy="215.7" r="0.550" fill="#f7c9b4" opacity="0.900"/><circle cx="298.4" cy="215.5" r="0.550" fill="#f7c9b4" opacity="0.900"/><circle cx="269.9" cy="221.0" r="0.550" fill="#f7c9b4" opacity="0.900"/><circle cx="275.3" cy="220.9" r="0.550" fill="#f7c9b4" opacity="0.900"/><circle cx="280.0" cy="220.1" r="0.550" fill="#f7c9b4" opacity="0.900"/><circle cx="284.2" cy="220.7" r="0.550" fill="#f7c9b4" opacity="0.900"/><circle cx="289.4" cy="220.9" r="0.550" fill="#f7c9b4" opacity="0.900"/><circle cx="294.3" cy="220.0" r="0.550" fill="#f7c9b4" opacity="0.900"/><circle cx="298.8" cy="220.7" r="0.550" fill="#f7c9b4" opacity="0.900"/><circle cx="303.4" cy="220.1" r="0.550" fill="#f7c9b4" opacity="0.900"/><circle cx="268.0" cy="224.5" r="0.550" fill="#f7c9b4" opacity="0.900"/><circle cx="273.3" cy="225.4" r="0.550" fill="#f7c9b4" opacity="0.900"/><circle cx="277.6" cy="224.8" r="0.550" fill="#f7c9b4" opacity="0.900"/><circle cx="282.7" cy="225.1" r="0.550" fill="#f7c9b4" opacity="0.900"/><circle cx="287.5" cy="225.4" r="0.550" fill="#f7c9b4" opacity="0.900"/><circle cx="291.8" cy="224.9" r="0.550" fill="#f7c9b4" opacity="0.900"/><circle cx="296.7" cy="224.9" r="0.550" fill="#f7c9b4" opacity="0.900"/><circle cx="301.0" cy="224.8" r="0.550" fill="#f7c9b4" opacity="0.900"/><circle cx="270.8" cy="229.0" r="0.550" fill="#f7c9b4" opacity="0.900"/><circle cx="274.5" cy="229.7" r="0.550" fill="#f7c9b4" opacity="0.900"/><circle cx="279.2" cy="229.5" r="0.550" fill="#f7c9b4" opacity="0.900"/><circle cx="283.8" cy="229.3" r="0.550" fill="#f7c9b4" opacity="0.900"/><circle cx="288.8" cy="229.1" r="0.550" fill="#f7c9b4" opacity="0.900"/><circle cx="292.6" cy="229.1" r="0.550" fill="#f7c9b4" opacity="0.900"/><circle cx="297.3" cy="229.2" r="0.550" fill="#f7c9b4" opacity="0.900"/><circle cx="301.4" cy="229.8" r="0.550" fill="#f7c9b4" opacity="0.900"/><circle cx="270.3" cy="234.1" r="0.550" fill="#f7c9b4" opacity="0.900"/><circle cx="275.4" cy="233.5" r="0.550" fill="#f7c9b4" opacity="0.900"/><circle cx="279.0" cy="233.7" r="0.550" fill="#f7c9b4" opacity="0.900"/><circle cx="284.2" cy="234.1" r="0.550" fill="#f7c9b4" opacity="0.900"/><circle cx="288.2" cy="233.8" r="0.550" fill="#f7c9b4" opacity="0.900"/><circle cx="292.6" cy="234.0" r="0.550" fill="#f7c9b4" opacity="0.900"/><circle cx="297.0" cy="234.2" r="0.550" fill="#f7c9b4" opacity="0.900"/><circle cx="274.0" cy="239.0" r="0.550" fill="#f7c9b4" opacity="0.900"/><circle cx="278.4" cy="239.1" r="0.550" fill="#f7c9b4" opacity="0.900"/><circle cx="282.3" cy="238.2" r="0.550" fill="#f7c9b4" opacity="0.900"/><circle cx="287.8" cy="238.8" r="0.550" fill="#f7c9b4" opacity="0.900"/><circle cx="291.8" cy="239.0" r="0.550" fill="#f7c9b4" opacity="0.900"/><circle cx="296.6" cy="238.9" r="0.550" fill="#f7c9b4" opacity="0.900"/><circle cx="273.7" cy="242.6" r="0.550" fill="#f7c9b4" opacity="0.900"/><circle cx="278.4" cy="242.6" r="0.550" fill="#f7c9b4" opacity="0.900"/><circle cx="282.8" cy="243.6" r="0.550" fill="#f7c9b4" opacity="0.900"/><circle cx="287.3" cy="242.4" r="0.550" fill="#f7c9b4" opacity="0.900"/><circle cx="291.5" cy="242.6" r="0.550" fill="#f7c9b4" opacity="0.900"/><circle cx="278.2" cy="247.3" r="0.550" fill="#f7c9b4" opacity="0.900"/><circle cx="282.0" cy="247.0" r="0.550" fill="#f7c9b4" opacity="0.900"/><circle cx="286.9" cy="247.4" r="0.550" fill="#f7c9b4" opacity="0.900"/><circle cx="290.4" cy="247.0" r="0.550" fill="#f7c9b4" opacity="0.900"/><circle cx="278.2" cy="251.1" r="0.550" fill="#f7c9b4" opacity="0.900"/><circle cx="282.6" cy="251.1" r="0.550" fill="#f7c9b4" opacity="0.900"/><circle cx="285.8" cy="251.5" r="0.550" fill="#f7c9b4" opacity="0.900"/><circle cx="282.0" cy="255.6" r="0.550" fill="#f7c9b4" opacity="0.900"/><circle cx="284.9" cy="255.0" r="0.550" fill="#f7c9b4" opacity="0.900"/><ellipse cx="274" cy="222" rx="5" ry="7" fill="#ff6a68" opacity="0.250"/><path d="M306 222 C304 236 294 250 283 259 L300 259 L308 235z" fill="#7a0810" opacity="0.250"/></g>
<g>
<path d="M283.500 213.300 C279 212.600 274 209.500 270.300 203.800 C274.500 204.800 279 206.800 282.800 209.800z" fill="#3c8a2a"/>
<path d="M282 213.800 C278.500 213.300 275 214.200 272.500 216.300 C276 217 280.500 216.300 283.800 214.800z" fill="#2f6e22"/>
<path d="M283.300 212.500 C279.800 208 278 202.500 279.500 196.800 C282.500 201 284.800 206.500 285.800 211.500z" fill="#4f9e36"/>
<path d="M281.200 203 C281.500 206 282.800 209.500 284.500 212" stroke="#2f6e22" stroke-width="0.600" fill="none"/>
<path d="M284.300 212.800 C283.800 207.500 284.500 203 286 199.800 C288 203.500 288.300 208.500 287 212.800z" fill="#2f7424"/>
<path d="M285.800 213 C287.500 208.500 291 203.500 295.200 200.500 C296.800 202.500 297.300 204.800 297 206.800 C294 210 290.500 212.800 287.500 214.200z" fill="#4a9833"/>
<path d="M291 205.500 C292.500 204 294.500 202 295.200 200.500" stroke="#86c45f" stroke-width="0.600" fill="none"/>
<path d="M286.500 213.800 C290.500 212.300 294.500 212.200 297.800 213.800 C294 215.800 289.800 215.900 286.500 214.800z" fill="#2f6e22"/>
</g>
<ellipse cx="285.300" cy="213.200" rx="2.600" ry="1.300" fill="#a9b552"/>
<rect x="263.300" y="195.500" width="42.500" height="63.700" fill="none" stroke="#858585" stroke-width="0.800"/>
<rect x="261.6" y="193.8" width="3.400" height="3.400" fill="#fff" stroke="#8a8a8a" stroke-width="0.700"/><rect x="282.8" y="193.8" width="3.400" height="3.400" fill="#fff" stroke="#8a8a8a" stroke-width="0.700"/><rect x="304.1" y="193.8" width="3.400" height="3.400" fill="#fff" stroke="#8a8a8a" stroke-width="0.700"/><rect x="261.6" y="225.60000000000002" width="3.400" height="3.400" fill="#fff" stroke="#8a8a8a" stroke-width="0.700"/><rect x="304.1" y="225.60000000000002" width="3.400" height="3.400" fill="#fff" stroke="#8a8a8a" stroke-width="0.700"/><rect x="261.6" y="257.5" width="3.400" height="3.400" fill="#fff" stroke="#8a8a8a" stroke-width="0.700"/><rect x="282.8" y="257.5" width="3.400" height="3.400" fill="#fff" stroke="#8a8a8a" stroke-width="0.700"/><rect x="304.1" y="257.5" width="3.400" height="3.400" fill="#fff" stroke="#8a8a8a" stroke-width="0.700"/>
<path d="M284.400 224.500v5.600M281.600 227.300h5.600" stroke="#9a9a9a" stroke-width="0.700"/><circle cx="284.400" cy="227.300" r="1.400" fill="none" stroke="#b0b0b0" stroke-width="0.700"/>
</svg>
</body></html>
